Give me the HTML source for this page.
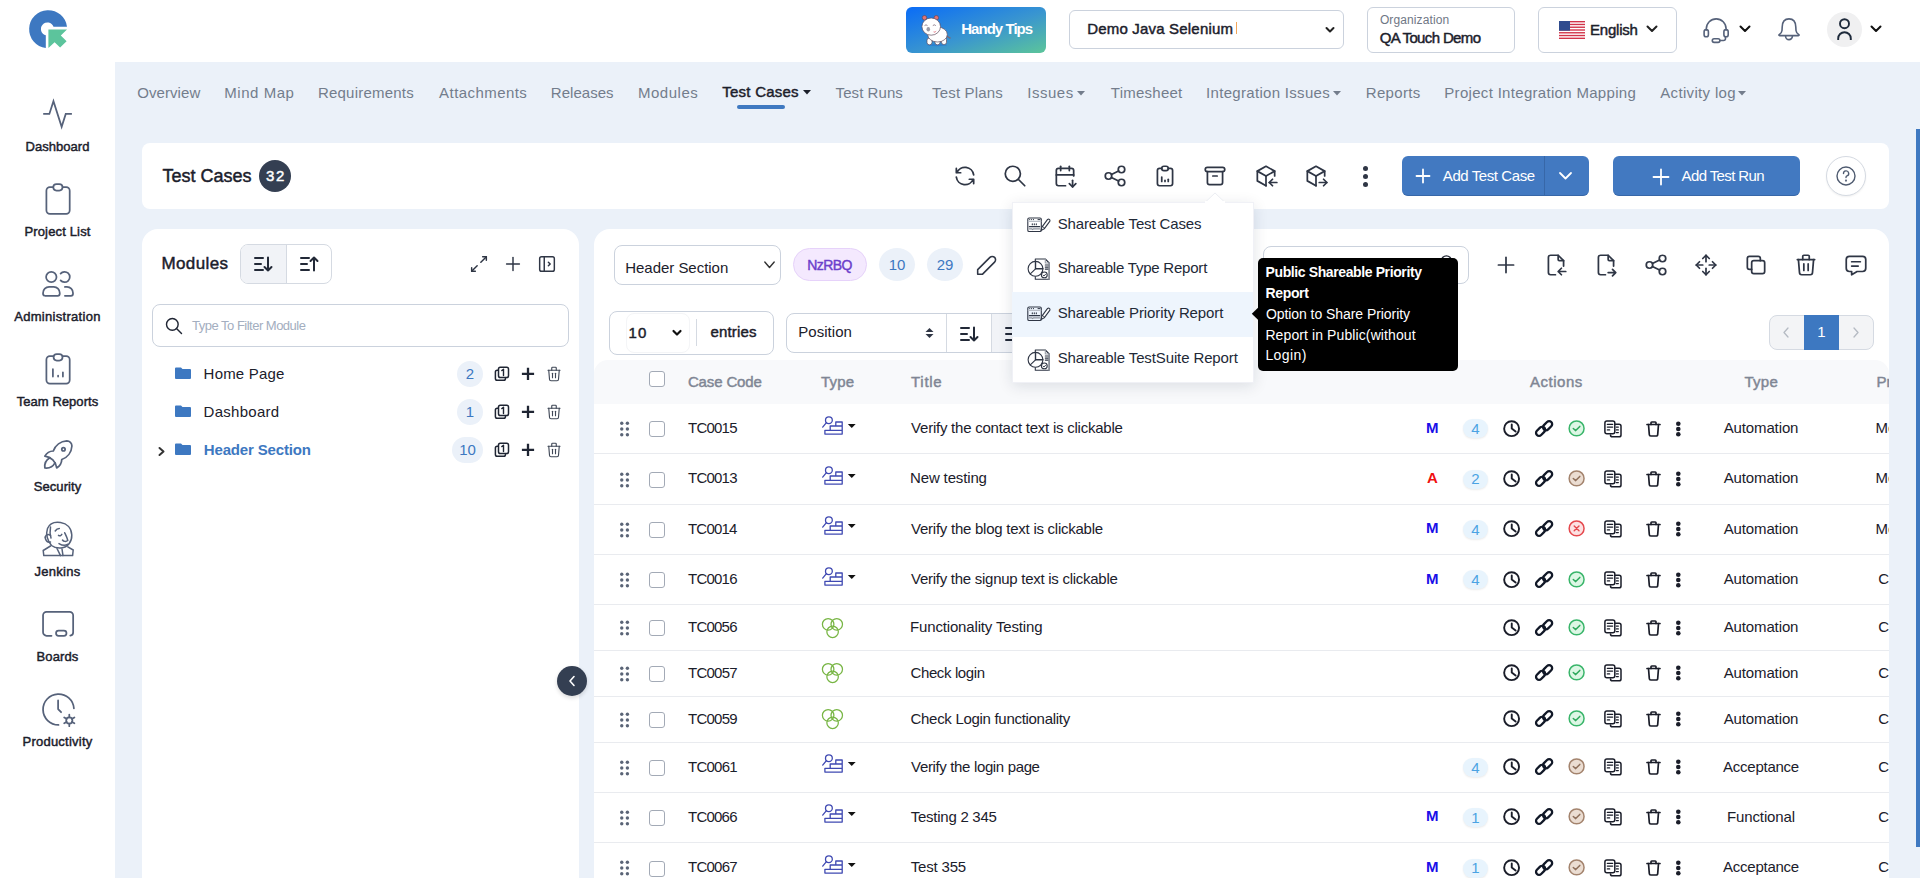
<!DOCTYPE html>
<html><head><meta charset="utf-8"><title>Test Cases</title><style>
*{margin:0;padding:0;box-sizing:border-box}
html,body{width:1920px;height:878px;overflow:hidden;background:#EBF1F9;font-family:"Liberation Sans",sans-serif;color:#1F2533}
.a{position:absolute}
.t{position:absolute;white-space:nowrap}
svg{position:absolute;overflow:visible}
</style></head><body>
<div class="a" style="left:0px;top:0px;width:1920px;height:62px;background:#fff"></div>
<div class="a" style="left:0px;top:0px;width:115px;height:878px;background:#fff"></div>
<svg style="left:29px;top:10px" width="38" height="38" viewBox="29 10 38 38">
<path d="M45.8 48 A19 19 0 1 1 67 26.7 L53.5 26.7 A6.5 6.5 0 1 0 45.8 35.3 Z" fill="#3D78C1"/>
<path d="M48.4 29.4 L67 29.4 L60.8 35.5 L66.6 41.2 L60.1 47.5 L54.6 42.2 L48.4 48 Z" fill="#5CC49C"/>
</svg>
<div class="t" style="left:0.0px;top:140.0px;font-size:13px;line-height:13px;-webkit-text-stroke:0.45px #1B202B;color:#1B202B;width:115px;text-align:center;letter-spacing:0.031px;">Dashboard</div>
<div class="t" style="left:0.0px;top:225.0px;font-size:13px;line-height:13px;-webkit-text-stroke:0.45px #1B202B;color:#1B202B;width:115px;text-align:center;letter-spacing:0.159px;">Project List</div>
<div class="t" style="left:0.0px;top:310.0px;font-size:13px;line-height:13px;-webkit-text-stroke:0.45px #1B202B;color:#1B202B;width:115px;text-align:center;letter-spacing:0.292px;">Administration</div>
<div class="t" style="left:0.0px;top:395.0px;font-size:13px;line-height:13px;-webkit-text-stroke:0.45px #1B202B;color:#1B202B;width:115px;text-align:center;letter-spacing:0.043px;">Team Reports</div>
<div class="t" style="left:0.0px;top:480.0px;font-size:13px;line-height:13px;-webkit-text-stroke:0.45px #1B202B;color:#1B202B;width:115px;text-align:center;letter-spacing:0.089px;">Security</div>
<div class="t" style="left:0.0px;top:565.0px;font-size:13px;line-height:13px;-webkit-text-stroke:0.45px #1B202B;color:#1B202B;width:115px;text-align:center;letter-spacing:0.271px;">Jenkins</div>
<div class="t" style="left:0.0px;top:650.0px;font-size:13px;line-height:13px;-webkit-text-stroke:0.45px #1B202B;color:#1B202B;width:115px;text-align:center;letter-spacing:0.11px;">Boards</div>
<div class="t" style="left:0.0px;top:735.0px;font-size:13px;line-height:13px;-webkit-text-stroke:0.45px #1B202B;color:#1B202B;width:115px;text-align:center;letter-spacing:0.232px;">Productivity</div>
<svg style="left:0;top:0" width="115" height="878" viewBox="0 0 115 878" fill="none" stroke="#56627A" stroke-width="1.75" stroke-linecap="round" stroke-linejoin="round">
<path d="M43.2 113.9 H49.35 L53.45 101.2 L61.65 126.85 L65.75 113.9 H71.9" stroke-linejoin="miter" stroke-linecap="butt"/>
<rect x="46.4" y="187.2" width="23.3" height="26.6" rx="3.5"/>
<rect x="53.3" y="184.1" width="9.2" height="6.4" rx="3.2" fill="#fff"/>
<circle cx="51.3" cy="277" r="5.2"/>
<path d="M60.6 273.66 A5.2 5.2 0 1 1 60.6 280.34"/>
<path d="M45 295.75 A2 2 0 0 1 43.05 293.75 V293 A6 6 0 0 1 49.05 286.95 H53.75 A6 6 0 0 1 59.75 293 V293.75 A2 2 0 0 1 57.75 295.75 Z"/>
<path d="M64.9 286.95 H67 A6 6 0 0 1 73 293 V293.75 A2 2 0 0 1 71 295.75 H64.9"/>
<rect x="46.4" y="356.2" width="23.3" height="27.4" rx="3.5"/>
<rect x="53.6" y="354.1" width="8.9" height="6.4" rx="3.2" fill="#fff"/>
<path d="M52.9 369.2 V376.6 M58.1 375.6 V376.6 M62.9 372.3 V376.6"/>
<g transform="translate(38.1,434.1) scale(1.69)" stroke-width="1.03"><path d="M4 13a8 8 0 0 1 7 7a6 6 0 0 0 3 -5a9 9 0 0 0 6 -8a3 3 0 0 0 -3 -3a9 9 0 0 0 -8 6a6 6 0 0 0 -5 3"/><path d="M7 14a6 6 0 0 0 -3 6a6 6 0 0 0 6 -3"/><circle cx="15" cy="9" r="1"/></g>
<g stroke-width="1.5">
<path d="M51.5 545.5 C47.5 541 45.5 534 47.5 528.5 C50 522.5 56 521.8 60.5 522.5 C67 523.5 71.5 528 71.8 535 C72 541.5 68 547.5 61 548 C57.5 548.3 54 547.5 51.5 545.5 Z"/>
<path d="M50.5 527 C49.8 531 50 535 51 538"/>
<path d="M50.5 535.5 C47 533 44.5 536 45.5 539 C46.3 541.5 48.5 542.5 50.5 542"/>
<path d="M55.2 531 C56.2 529.5 57.8 528.6 59.3 528.6"/>
<path d="M58.5 535.4 C59.8 536.2 61 535.8 61.8 534.4"/>
<path d="M64.7 532.8 C66 535.5 67.3 538 67.8 540.5 C66 542 63.5 541.5 62.5 540"/>
<path d="M59 543.6 C62 545.5 65.5 545.8 68 544.2"/>
<path d="M50.5 546 L43.2 550.5 L43.8 555.6 H72.6 L73.2 550 L67.8 546.8"/>
<path d="M57 548.5 L60.5 555.6 M62 549 L63 555.6"/>
</g>
<path d="M51.5 635.75 H46.55 A3.5 3.5 0 0 1 43.05 632.25 V615.35 A3.5 3.5 0 0 1 46.55 611.85 H69.65 A3.5 3.5 0 0 1 73.15 615.35 V632.25 A3.5 3.5 0 0 1 70.3 635.7"/>
<rect x="56.05" y="630.55" width="10.4" height="5.2" rx="2.5"/>
<path d="M58.5 724.95 A15.45 15.45 0 1 1 73.9 708.4"/>
<path d="M58.1 700.4 V709.1 L61.1 712.2"/>
<circle cx="69.3" cy="720.4" r="3.1"/>
<path d="M69.3 717.3 V714.6 M69.3 723.5 V726.2 M66.6 718.85 L64.2 717.5 M72 718.85 L74.4 717.5 M66.6 721.95 L64.2 723.3 M72 721.95 L74.4 723.3"/>
</svg>
<div class="a" style="left:906px;top:7px;width:140px;height:46px;border-radius:6px;background:linear-gradient(to bottom right,#0A6CF7 0%,#3A96CF 55%,#5CC59A 100%)"></div>
<div class="t" style="left:961.2px;top:20.9px;font-size:15px;line-height:15px;font-weight:700;color:#fff;letter-spacing:-0.956px;">Handy Tips</div>
<svg style="left:906px;top:7px" width="60" height="46" viewBox="906 7 60 46" stroke="#5F4B5B" stroke-width="0.7">
<ellipse cx="937" cy="45" rx="10" ry="1.2" fill="#1F6FD0" stroke="none" opacity="0.5"/>
<path d="M946.5 36 L950.5 38.3" stroke="#7A6A78" stroke-width="1.4"/>
<circle cx="924.5" cy="17.8" r="2.3" fill="#E27373"/>
<circle cx="936.3" cy="17.8" r="2.3" fill="#E27373"/>
<rect x="927" y="38" width="5" height="6.8" rx="2.3" fill="#fff"/>
<rect x="935" y="38" width="5" height="6.8" rx="2.3" fill="#fff"/>
<rect x="941.5" y="37" width="5" height="7.5" rx="2.3" fill="#fff"/>
<ellipse cx="937.5" cy="34.5" rx="9.8" ry="7.5" fill="#fff"/>
<ellipse cx="931.2" cy="26.6" rx="9.3" ry="8.6" fill="#fff"/>
<ellipse cx="928.3" cy="29.2" rx="1.8" ry="2.2" fill="#9A9AA6" stroke="none"/>
<path d="M933 31.5 Q935 32.5 936.6 30.5 Q935 33.8 933 31.5Z" fill="#D94A5A" stroke="none"/>
<path d="M924.5 25.6 Q926 24 927.5 25.6 M932.8 25.6 Q934.3 24 935.8 25.6" fill="none" stroke="#6B5566" stroke-width="0.7"/>
</svg>
<div class="a" style="left:1069px;top:10px;width:275px;height:39px;border:1px solid #CBD2DD;border-radius:6px;background:#fff"></div>
<div class="t" style="left:1087.2px;top:21.1px;font-size:15px;line-height:15px;-webkit-text-stroke:0.45px #1B202B;color:#1B202B;letter-spacing:0.19px;">Demo Java Selenium</div>
<div class="a" style="left:1236px;top:22px;width:1px;height:12px;background:#F2A65A"></div>
<svg style="left:1325px;top:26px;" width="10" height="8" viewBox="0 0 10 8" fill="none" stroke="#222" stroke-width="2" stroke-linecap="round" stroke-linejoin="round"><path d="M1.5 2 L5 5.5 L8.5 2"/></svg>
<div class="a" style="left:1367px;top:7px;width:148px;height:46px;border:1px solid #CBD2DD;border-radius:6px;background:#fff"></div>
<div class="t" style="left:1379.9px;top:13.6px;font-size:12px;line-height:12px;color:#6F7785;letter-spacing:0.114px;">Organization</div>
<div class="t" style="left:1379.7px;top:30.3px;font-size:15px;line-height:15px;-webkit-text-stroke:0.45px #1B202B;color:#1B202B;letter-spacing:-0.635px;">QA Touch Demo</div>
<div class="a" style="left:1538px;top:7px;width:139px;height:46px;border:1px solid #CBD2DD;border-radius:6px;background:#fff"></div>
<div class="a" style="left:1559px;top:21px;width:26px;height:18px;background:#fff"></div>
<svg style="left:1559px;top:21px" width="26" height="18" viewBox="0 0 26 18"><rect x="0" y="0.00" width="26" height="1.38" fill="#D2344A"/><rect x="0" y="2.77" width="26" height="1.38" fill="#D2344A"/><rect x="0" y="5.54" width="26" height="1.38" fill="#D2344A"/><rect x="0" y="8.31" width="26" height="1.38" fill="#D2344A"/><rect x="0" y="11.08" width="26" height="1.38" fill="#D2344A"/><rect x="0" y="13.85" width="26" height="1.38" fill="#D2344A"/><rect x="0" y="16.62" width="26" height="1.38" fill="#D2344A"/><rect x="0" y="0" width="11" height="9.7" fill="#2F4B8E"/></svg>
<div class="t" style="left:1590.0px;top:21.5px;font-size:15px;line-height:15px;-webkit-text-stroke:0.45px #1B202B;color:#1B202B;letter-spacing:-0.217px;">English</div>
<svg style="left:1646px;top:25px;" width="12" height="8" viewBox="0 0 12 8" fill="none" stroke="#222" stroke-width="2" stroke-linecap="round" stroke-linejoin="round"><path d="M1.5 1.5 L6 6 L10.5 1.5"/></svg>
<svg style="left:1690px;top:5px" width="200" height="50" viewBox="1690 5 200 50" fill="none" stroke-linecap="round" stroke-linejoin="round">
<g stroke="#56627A" stroke-width="1.6">
<path d="M1706.3 30 V28.8 A9.9 9.9 0 0 1 1726.1 28.8 V30"/>
<rect x="1704.1" y="29.6" width="4.3" height="7.2" rx="2.1"/>
<rect x="1723.9" y="29.6" width="4.3" height="7.2" rx="2.1"/>
<path d="M1725.5 37 V38.5 A2 2 0 0 1 1723.5 40.5 H1720"/>
<rect x="1712.3" y="38.8" width="7.6" height="3.6" rx="1.8"/>
<path d="M1789 18.9 C1784.2 18.9 1782.3 22.8 1782.2 27 L1782 30.5 C1781.8 32.6 1780.5 33.8 1779.2 34.6 C1778.6 35 1778.9 35.6 1779.6 35.6 H1798.4 C1799.1 35.6 1799.4 35 1798.8 34.6 C1797.5 33.8 1796.2 32.6 1796 30.5 L1795.8 27 C1795.7 22.8 1793.8 18.9 1789 18.9 Z"/>
<path d="M1785.6 36.2 A3.4 3.4 0 0 0 1792.4 36.2"/>
</g>
</svg>
<svg style="left:1739px;top:25px;" width="12" height="8" viewBox="0 0 12 8" fill="none" stroke="#111" stroke-width="2" stroke-linecap="round" stroke-linejoin="round"><path d="M1.5 1.5 L6 6 L10.5 1.5"/></svg>
<div class="a" style="left:1827px;top:12px;width:35px;height:35px;border-radius:50%;background:#F0F0F1"></div>
<svg style="left:1827px;top:12px" width="35" height="35" viewBox="1827 12 35 35" fill="none" stroke="#1E2A3B" stroke-width="1.9" stroke-linecap="butt">
<circle cx="1844.5" cy="23.7" r="4.5"/>
<path d="M1838.2 39.9 V38.5 A6.3 6.3 0 0 1 1850.8 38.5 V39.9"/>
</svg>
<svg style="left:1870px;top:25px;" width="12" height="8" viewBox="0 0 12 8" fill="none" stroke="#111" stroke-width="2" stroke-linecap="round" stroke-linejoin="round"><path d="M1.5 1.5 L6 6 L10.5 1.5"/></svg>
<div class="a" style="left:1916px;top:129px;width:4px;height:718px;background:#3F79C1"></div>
<div class="t" style="left:137.2px;top:85.0px;font-size:15px;line-height:15px;color:#737D8C;letter-spacing:0.079px;">Overview</div>
<div class="t" style="left:224.3px;top:85.0px;font-size:15px;line-height:15px;color:#737D8C;letter-spacing:0.543px;">Mind Map</div>
<div class="t" style="left:317.9px;top:85.0px;font-size:15px;line-height:15px;color:#737D8C;letter-spacing:0.225px;">Requirements</div>
<div class="t" style="left:439.1px;top:85.0px;font-size:15px;line-height:15px;color:#737D8C;letter-spacing:0.433px;">Attachments</div>
<div class="t" style="left:550.8px;top:85.0px;font-size:15px;line-height:15px;color:#737D8C;letter-spacing:0.036px;">Releases</div>
<div class="t" style="left:638.0px;top:85.0px;font-size:15px;line-height:15px;color:#737D8C;letter-spacing:0.517px;">Modules</div>
<div class="t" style="left:835.6px;top:85.0px;font-size:15px;line-height:15px;color:#737D8C;letter-spacing:0.066px;">Test Runs</div>
<div class="t" style="left:932.0px;top:85.0px;font-size:15px;line-height:15px;color:#737D8C;letter-spacing:0.181px;">Test Plans</div>
<div class="t" style="left:1027.3px;top:85.0px;font-size:15px;line-height:15px;color:#737D8C;letter-spacing:0.5px;">Issues</div>
<div class="t" style="left:1110.8px;top:85.0px;font-size:15px;line-height:15px;color:#737D8C;letter-spacing:0.25px;">Timesheet</div>
<div class="t" style="left:1206.1px;top:85.0px;font-size:15px;line-height:15px;color:#737D8C;letter-spacing:0.306px;">Integration Issues</div>
<div class="t" style="left:1365.8px;top:85.0px;font-size:15px;line-height:15px;color:#737D8C;letter-spacing:0.325px;">Reports</div>
<div class="t" style="left:1444.3px;top:85.0px;font-size:15px;line-height:15px;color:#737D8C;letter-spacing:0.31px;">Project Integration Mapping</div>
<div class="t" style="left:1660.3px;top:85.0px;font-size:15px;line-height:15px;color:#737D8C;letter-spacing:0.323px;">Activity log</div>
<div class="t" style="left:722.3px;top:84.0px;font-size:15px;line-height:15px;-webkit-text-stroke:0.45px #1B202B;color:#1B202B;letter-spacing:0.236px;">Test Cases</div>
<svg style="left:802.5px;top:90px" width="8" height="5" viewBox="0 0 8 5"><path d="M0 0 H8 L4 4.5 Z" fill="#1B202B"/></svg>
<svg style="left:1076.5px;top:91px" width="8" height="5" viewBox="0 0 8 5"><path d="M0 0 H8 L4 4.5 Z" fill="#737D8C"/></svg>
<svg style="left:1333px;top:91px" width="8" height="5" viewBox="0 0 8 5"><path d="M0 0 H8 L4 4.5 Z" fill="#737D8C"/></svg>
<svg style="left:1738.3px;top:91px" width="8" height="5" viewBox="0 0 8 5"><path d="M0 0 H8 L4 4.5 Z" fill="#737D8C"/></svg>
<div class="a" style="left:737px;top:105px;width:48px;height:4px;border-radius:2px;background:#3F79C1"></div>
<div class="a" style="left:142px;top:143px;width:1747px;height:66px;border-radius:8px;background:#fff"></div>
<div class="t" style="left:162.4px;top:166.7px;font-size:18px;line-height:18px;-webkit-text-stroke:0.45px #1B202B;color:#1B202B;letter-spacing:0.0px;">Test Cases</div>
<div class="a" style="left:259px;top:160px;width:32px;height:32px;border-radius:50%;background:#343F52"></div>
<div class="t" style="left:266.0px;top:168.1px;font-size:15px;line-height:15px;-webkit-text-stroke:0.45px #fff;color:#fff;letter-spacing:1.625px;">32</div>
<svg style="left:952.0px;top:163.0px;" width="26" height="26" viewBox="0 0 24 24" fill="none" stroke="#2F3645" stroke-width="1.6" stroke-linecap="round" stroke-linejoin="round"><path d="M20 11a8.1 8.1 0 0 0 -15.5 -2m-.5 -4v4h4"/><path d="M4 13a8.1 8.1 0 0 0 15.5 2m.5 4v-4h-4"/></svg>
<svg style="left:1002.0px;top:163.0px;" width="26" height="26" viewBox="0 0 24 24" fill="none" stroke="#2F3645" stroke-width="1.6" stroke-linecap="round" stroke-linejoin="round"><circle cx="10" cy="10" r="7"/><path d="M21 21l-6 -6"/></svg>
<svg style="left:1052.0px;top:163.0px;" width="26" height="26" viewBox="0 0 24 24" fill="none" stroke="#2F3645" stroke-width="1.6" stroke-linecap="round" stroke-linejoin="round"><path d="M12.5 21h-6.5a2 2 0 0 1 -2 -2v-12a2 2 0 0 1 2 -2h12a2 2 0 0 1 2 2v5"/><path d="M19 16v6"/><path d="M22 19l-3 3l-3 -3"/><path d="M16 3v4"/><path d="M8 3v4"/><path d="M4 11h16"/></svg>
<svg style="left:1102.0px;top:163.0px;" width="26" height="26" viewBox="0 0 24 24" fill="none" stroke="#2F3645" stroke-width="1.6" stroke-linecap="round" stroke-linejoin="round"><circle cx="6" cy="12" r="3"/><circle cx="18" cy="6" r="3"/><circle cx="18" cy="18" r="3"/><path d="M8.7 10.7l6.6 -3.4"/><path d="M8.7 13.3l6.6 3.4"/></svg>
<svg style="left:1152.0px;top:163.0px;" width="26" height="26" viewBox="0 0 24 24" fill="none" stroke="#2F3645" stroke-width="1.6" stroke-linecap="round" stroke-linejoin="round"><path d="M9 5h-2a2 2 0 0 0 -2 2v12a2 2 0 0 0 2 2h10a2 2 0 0 0 2 -2v-12a2 2 0 0 0 -2 -2h-2"/><rect x="9" y="3" width="6" height="4" rx="2"/><path d="M9 17v-4"/><path d="M12 17v-1"/><path d="M15 17v-2"/></svg>
<svg style="left:1202.0px;top:163.0px;" width="26" height="26" viewBox="0 0 24 24" fill="none" stroke="#2F3645" stroke-width="1.6" stroke-linecap="round" stroke-linejoin="round"><rect x="3" y="4" width="18" height="4" rx="2"/><path d="M5 8v10a2 2 0 0 0 2 2h10a2 2 0 0 0 2 -2v-10"/><path d="M10 12l4 0"/></svg>
<svg style="left:1253.0px;top:163.0px;" width="26" height="26" viewBox="0 0 24 24" fill="none" stroke="#2F3645" stroke-width="1.6" stroke-linecap="round" stroke-linejoin="round"><path d="M12 21l-8 -4.5v-9l8 -4.5l8 4.5v4.5"/><path d="M12 12l8 -4.5"/><path d="M12 12v9"/><path d="M12 12l-8 -4.5"/><path d="M22 18h-7"/><path d="M18 15l-3 3l3 3"/></svg>
<svg style="left:1303.0px;top:163.0px;" width="26" height="26" viewBox="0 0 24 24" fill="none" stroke="#2F3645" stroke-width="1.6" stroke-linecap="round" stroke-linejoin="round"><path d="M12 21l-8 -4.5v-9l8 -4.5l8 4.5v4.5"/><path d="M12 12l8 -4.5"/><path d="M12 12v9"/><path d="M12 12l-8 -4.5"/><path d="M15 18h7"/><path d="M19 15l3 3l-3 3"/></svg>
<div class="a" style="left:1363px;top:165.5px;width:5px;height:5px;border-radius:50%;background:#2F3645"></div>
<div class="a" style="left:1363px;top:173.5px;width:5px;height:5px;border-radius:50%;background:#2F3645"></div>
<div class="a" style="left:1363px;top:181.5px;width:5px;height:5px;border-radius:50%;background:#2F3645"></div>
<div class="a" style="left:1402px;top:156px;width:187px;height:40px;border-radius:6px;background:#4279C1;border-bottom:1px solid #3767A8"></div>
<div class="a" style="left:1544px;top:156px;width:1px;height:40px;background:#3767A8"></div>
<svg style="left:1416px;top:169px;" width="14" height="14" viewBox="0 0 14 14" fill="none" stroke="#fff" stroke-width="1.8" stroke-linecap="round" stroke-linejoin="round"><path d="M7 0.5 V13.5 M0.5 7 H13.5"/></svg>
<div class="t" style="left:1442.8px;top:168.1px;font-size:15px;line-height:15px;color:#fff;letter-spacing:-0.413px;">Add Test Case</div>
<svg style="left:1559px;top:172px;" width="13" height="8" viewBox="0 0 13 8" fill="none" stroke="#fff" stroke-width="1.8" stroke-linecap="round" stroke-linejoin="round"><path d="M1 1 L6.5 6.5 L12 1"/></svg>
<div class="a" style="left:1613px;top:156px;width:187px;height:40px;border-radius:6px;background:#4279C1;border-bottom:1px solid #3767A8"></div>
<svg style="left:1653px;top:169px;" width="16" height="16" viewBox="0 0 16 16" fill="none" stroke="#fff" stroke-width="1.8" stroke-linecap="round" stroke-linejoin="round"><path d="M8 0.5 V15.5 M0.5 8 H15.5"/></svg>
<div class="t" style="left:1681.6px;top:168.1px;font-size:15px;line-height:15px;color:#fff;letter-spacing:-0.625px;">Add Test Run</div>
<div class="a" style="left:1826px;top:156px;width:40px;height:40px;border-radius:50%;border:1px solid #D5DAE2;background:#fff;box-shadow:0 1px 2px rgba(0,0,0,0.06)"></div>
<svg style="left:1836px;top:166px;" width="20" height="20" viewBox="0 0 20 20" fill="none" stroke="#4F5B70" stroke-width="1.4" stroke-linecap="round" stroke-linejoin="round"><circle cx="10" cy="10" r="9"/><path d="M7.5 7.5 a2.6 2.6 0 1 1 3.5 2.4 c-.7 .3 -1 .8 -1 1.6"/><circle cx="10" cy="14.6" r=".4" fill="#4F5B70"/></svg>
<div class="a" style="left:142px;top:229px;width:437px;height:700px;border-radius:16px;background:#fff"></div>
<div class="t" style="left:161.4px;top:254.6px;font-size:17px;line-height:17px;-webkit-text-stroke:0.45px #1B202B;color:#1B202B;letter-spacing:0.392px;">Modules</div>
<div class="a" style="left:240px;top:244px;width:92px;height:40px;border:1px solid #D5DAE2;border-radius:8px;background:#fff;overflow:hidden"></div>
<div class="a" style="left:241px;top:245px;width:45px;height:38px;background:#F1F3F7;border-radius:7px 0 0 7px"></div>
<div class="a" style="left:286px;top:245px;width:1px;height:38px;background:#D5DAE2"></div>
<svg style="left:254px;top:256px;" width="19" height="16" viewBox="0 0 19 16" fill="none" stroke="#222937" stroke-width="2" stroke-linecap="round" stroke-linejoin="round"><path d="M1 2 H9 M1 8 H7 M1 14 H9"/><path d="M14 1.5 V14.5 M10.5 11 L14 14.5 L17.5 11"/></svg>
<svg style="left:300px;top:256px;" width="19" height="16" viewBox="0 0 19 16" fill="none" stroke="#222937" stroke-width="2" stroke-linecap="round" stroke-linejoin="round"><path d="M1 2 H9 M1 8 H7 M1 14 H9"/><path d="M14 1.5 V14.5 M10.5 5 L14 1.5 L17.5 5"/></svg>
<svg style="left:468.0px;top:253.0px;" width="22" height="22" viewBox="0 0 24 24" fill="none" stroke="#2F3645" stroke-width="1.6" stroke-linecap="round" stroke-linejoin="round"><path d="M16 4l4 0l0 4"/><path d="M14 10l6 -6"/><path d="M8 20l-4 0l0 -4"/><path d="M4 20l6 -6"/></svg>
<svg style="left:502.0px;top:253.0px;" width="22" height="22" viewBox="0 0 24 24" fill="none" stroke="#2F3645" stroke-width="1.6" stroke-linecap="round" stroke-linejoin="round"><path d="M12 5l0 14"/><path d="M5 12l14 0"/></svg>
<svg style="left:536.0px;top:253.0px;" width="22" height="22" viewBox="0 0 24 24" fill="none" stroke="#2F3645" stroke-width="1.6" stroke-linecap="round" stroke-linejoin="round"><rect x="4" y="4" width="16" height="16" rx="2"/><path d="M9 4v16"/><path d="M13.5 10l2 2l-2 2"/></svg>
<div class="a" style="left:152px;top:304px;width:417px;height:43px;border:1px solid #CBD2DD;border-radius:8px;background:#fff"></div>
<svg style="left:164.0px;top:316.0px;" width="20" height="20" viewBox="0 0 24 24" fill="none" stroke="#1F2533" stroke-width="1.7" stroke-linecap="round" stroke-linejoin="round"><circle cx="10" cy="10" r="7"/><path d="M21 21l-6 -6"/></svg>
<div class="t" style="left:192.1px;top:319.0px;font-size:13px;line-height:13px;color:#A3AEC0;letter-spacing:-0.512px;">Type To Filter Module</div>
<svg style="left:175px;top:367px" width="16" height="12" viewBox="0 0 16 12"><path d="M1 0.5 H6 L7.5 2 H15 A1 1 0 0 1 16 3 V11 A1 1 0 0 1 15 12 H1 A1 1 0 0 1 0 11 V1.5 A1 1 0 0 1 1 0.5Z" fill="#3D78C1"/></svg>
<div class="t" style="left:203.6px;top:366.3px;font-size:15px;line-height:15px;color:#1B202B;letter-spacing:0.203px;">Home Page</div>
<div class="a" style="left:457px;top:361px;width:26px;height:26px;border-radius:13px;background:#EBF1F9"></div>
<div class="t" style="left:457.0px;top:365.9px;font-size:15px;line-height:15px;color:#3D78C1;width:26px;text-align:center;">2</div>
<svg style="left:490px;top:362px" width="80" height="24" viewBox="490 -12 80 24" fill="none" stroke="#1F2533" stroke-linejoin="round"><rect x="495.4" y="-3.7" width="10.1" height="10" rx="1.8" stroke-width="1.5"/><rect x="498.5" y="-6.7" width="10" height="10.2" rx="1.8" fill="#fff" stroke-width="1.5"/><path d="M501.8 -3.5 L503.5 -4.8 V1.5" stroke-width="1.4" stroke-linecap="round"/><path d="M528 -6.2 V6.1 M521.9 -0.05 H534.1" stroke-width="2.3"/></svg>
<svg style="left:545.0px;top:365.0px;" width="18" height="18" viewBox="0 0 24 24" fill="none" stroke="#3F4756" stroke-width="1.5" stroke-linecap="round" stroke-linejoin="round"><path d="M4 7l16 0"/><path d="M10 11l0 6"/><path d="M14 11l0 6"/><path d="M5 7l1 12a2 2 0 0 0 2 2h8a2 2 0 0 0 2 -2l1 -12"/><path d="M9 7v-3a1 1 0 0 1 1 -1h4a1 1 0 0 1 1 1v3"/></svg>
<svg style="left:175px;top:405px" width="16" height="12" viewBox="0 0 16 12"><path d="M1 0.5 H6 L7.5 2 H15 A1 1 0 0 1 16 3 V11 A1 1 0 0 1 15 12 H1 A1 1 0 0 1 0 11 V1.5 A1 1 0 0 1 1 0.5Z" fill="#3D78C1"/></svg>
<div class="t" style="left:203.6px;top:404.3px;font-size:15px;line-height:15px;color:#1B202B;letter-spacing:0.272px;">Dashboard</div>
<div class="a" style="left:457px;top:399px;width:26px;height:26px;border-radius:13px;background:#EBF1F9"></div>
<div class="t" style="left:457.0px;top:403.9px;font-size:15px;line-height:15px;color:#3D78C1;width:26px;text-align:center;">1</div>
<svg style="left:490px;top:400px" width="80" height="24" viewBox="490 -12 80 24" fill="none" stroke="#1F2533" stroke-linejoin="round"><rect x="495.4" y="-3.7" width="10.1" height="10" rx="1.8" stroke-width="1.5"/><rect x="498.5" y="-6.7" width="10" height="10.2" rx="1.8" fill="#fff" stroke-width="1.5"/><path d="M501.8 -3.5 L503.5 -4.8 V1.5" stroke-width="1.4" stroke-linecap="round"/><path d="M528 -6.2 V6.1 M521.9 -0.05 H534.1" stroke-width="2.3"/></svg>
<svg style="left:545.0px;top:403.0px;" width="18" height="18" viewBox="0 0 24 24" fill="none" stroke="#3F4756" stroke-width="1.5" stroke-linecap="round" stroke-linejoin="round"><path d="M4 7l16 0"/><path d="M10 11l0 6"/><path d="M14 11l0 6"/><path d="M5 7l1 12a2 2 0 0 0 2 2h8a2 2 0 0 0 2 -2l1 -12"/><path d="M9 7v-3a1 1 0 0 1 1 -1h4a1 1 0 0 1 1 1v3"/></svg>
<svg style="left:175px;top:443px" width="16" height="12" viewBox="0 0 16 12"><path d="M1 0.5 H6 L7.5 2 H15 A1 1 0 0 1 16 3 V11 A1 1 0 0 1 15 12 H1 A1 1 0 0 1 0 11 V1.5 A1 1 0 0 1 1 0.5Z" fill="#3D78C1"/></svg>
<div class="t" style="left:203.8px;top:442.3px;font-size:15px;line-height:15px;font-weight:700;color:#3D78C1;letter-spacing:-0.158px;">Header Section</div>
<div class="a" style="left:452px;top:437px;width:31px;height:26px;border-radius:13px;background:#EBF1F9"></div>
<div class="t" style="left:452.0px;top:441.9px;font-size:15px;line-height:15px;color:#3D78C1;width:31px;text-align:center;">10</div>
<svg style="left:490px;top:438px" width="80" height="24" viewBox="490 -12 80 24" fill="none" stroke="#1F2533" stroke-linejoin="round"><rect x="495.4" y="-3.7" width="10.1" height="10" rx="1.8" stroke-width="1.5"/><rect x="498.5" y="-6.7" width="10" height="10.2" rx="1.8" fill="#fff" stroke-width="1.5"/><path d="M501.8 -3.5 L503.5 -4.8 V1.5" stroke-width="1.4" stroke-linecap="round"/><path d="M528 -6.2 V6.1 M521.9 -0.05 H534.1" stroke-width="2.3"/></svg>
<svg style="left:545.0px;top:441.0px;" width="18" height="18" viewBox="0 0 24 24" fill="none" stroke="#3F4756" stroke-width="1.5" stroke-linecap="round" stroke-linejoin="round"><path d="M4 7l16 0"/><path d="M10 11l0 6"/><path d="M14 11l0 6"/><path d="M5 7l1 12a2 2 0 0 0 2 2h8a2 2 0 0 0 2 -2l1 -12"/><path d="M9 7v-3a1 1 0 0 1 1 -1h4a1 1 0 0 1 1 1v3"/></svg>
<svg style="left:158px;top:447px;" width="7" height="9" viewBox="0 0 7 9" fill="none" stroke="#333" stroke-width="2" stroke-linecap="round" stroke-linejoin="round"><path d="M1.5 1 L5.5 4.5 L1.5 8"/></svg>
<div class="a" style="left:557px;top:666px;width:30px;height:30px;border-radius:50%;background:#343F52;box-shadow:0 2px 4px rgba(0,0,0,0.15)"></div>
<svg style="left:567px;top:675px;" width="10" height="12" viewBox="0 0 10 12" fill="none" stroke="#fff" stroke-width="1.6" stroke-linecap="round" stroke-linejoin="round"><path d="M7 1.5 L3 6 L7 10.5"/></svg>
<div class="a" style="left:594px;top:229px;width:1295px;height:700px;border-radius:16px;background:#fff;overflow:hidden"></div>
<div class="a" style="left:614px;top:245px;width:167px;height:40px;border:1px solid #CBD2DD;border-radius:8px;background:#fff"></div>
<div class="t" style="left:625.2px;top:259.8px;font-size:15px;line-height:15px;color:#1B202B;letter-spacing:-0.025px;">Header Section</div>
<svg style="left:764px;top:261px;" width="11" height="8" viewBox="0 0 11 8" fill="none" stroke="#333" stroke-width="1.4" stroke-linecap="round" stroke-linejoin="round"><path d="M0.8 1 L5.5 6.5 L10.2 1"/></svg>
<div class="a" style="left:793px;top:248px;width:74px;height:33px;border:1px solid #E6D2FA;border-radius:17px;background:#F4E9FE"></div>
<div class="t" style="left:807.3px;top:258.1px;font-size:14px;line-height:14px;-webkit-text-stroke:0.45px #6C3FCB;color:#6C3FCB;letter-spacing:-0.581px;">NzRBQ</div>
<div class="a" style="left:879px;top:248px;width:36px;height:33px;border-radius:50%;background:#EBF1F9"></div>
<div class="t" style="left:879.0px;top:257.3px;font-size:15px;line-height:15px;color:#3D78C1;width:36px;text-align:center;">10</div>
<div class="a" style="left:927px;top:248px;width:36px;height:33px;border-radius:50%;background:#EBF1F9"></div>
<div class="t" style="left:927.0px;top:257.3px;font-size:15px;line-height:15px;color:#3D78C1;width:36px;text-align:center;">29</div>
<svg style="left:973.3px;top:251.3px;" width="28" height="28" viewBox="0 0 24 24" fill="none" stroke="#2F3645" stroke-width="1.35" stroke-linecap="round" stroke-linejoin="round"><path d="M4 20h4l10.5 -10.5a2.828 2.828 0 1 0 -4 -4l-10.5 10.5v4"/></svg>
<div class="a" style="left:1263px;top:246px;width:206px;height:38px;border:1px solid #CBD2DD;border-radius:8px;background:#fff"></div>
<svg style="left:1440px;top:255px;" width="13" height="13" viewBox="1440 255 13 13" fill="none" stroke="#1F2533" stroke-width="1.4" stroke-linecap="round" stroke-linejoin="round"><circle cx="1446.4" cy="260.9" r="5"/></svg>
<svg style="left:1493.0px;top:252.0px;" width="26" height="26" viewBox="0 0 24 24" fill="none" stroke="#2F3645" stroke-width="1.6" stroke-linecap="round" stroke-linejoin="round"><path d="M12 5l0 14"/><path d="M5 12l14 0"/></svg>
<svg style="left:1543.0px;top:252.0px;" width="26" height="26" viewBox="0 0 24 24" fill="none" stroke="#2F3645" stroke-width="1.6" stroke-linecap="round" stroke-linejoin="round"><path d="M14 3v4a1 1 0 0 0 1 1h4"/><path d="M11.5 21h-4.5a2 2 0 0 1 -2 -2v-14a2 2 0 0 1 2 -2h7l5 5v5"/><path d="M21 18h-7m3 -3l-3 3l3 3"/></svg>
<svg style="left:1593.0px;top:252.0px;" width="26" height="26" viewBox="0 0 24 24" fill="none" stroke="#2F3645" stroke-width="1.6" stroke-linecap="round" stroke-linejoin="round"><path d="M14 3v4a1 1 0 0 0 1 1h4"/><path d="M11.5 21h-4.5a2 2 0 0 1 -2 -2v-14a2 2 0 0 1 2 -2h7l5 5v5m-5 6h7m-3 -3l3 3l-3 3"/></svg>
<svg style="left:1643.0px;top:252.0px;" width="26" height="26" viewBox="0 0 24 24" fill="none" stroke="#2F3645" stroke-width="1.6" stroke-linecap="round" stroke-linejoin="round"><circle cx="6" cy="12" r="3"/><circle cx="18" cy="6" r="3"/><circle cx="18" cy="18" r="3"/><path d="M8.7 10.7l6.6 -3.4"/><path d="M8.7 13.3l6.6 3.4"/></svg>
<svg style="left:1693.0px;top:252.0px;" width="26" height="26" viewBox="0 0 24 24" fill="none" stroke="#2F3645" stroke-width="1.6" stroke-linecap="round" stroke-linejoin="round"><path d="M18 9l3 3l-3 3"/><path d="M15 12h6"/><path d="M6 9l-3 3l3 3"/><path d="M3 12h6"/><path d="M9 18l3 3l3 -3"/><path d="M12 15v6"/><path d="M15 6l-3 -3l-3 3"/><path d="M12 3v6"/></svg>
<svg style="left:1743.0px;top:252.0px;" width="26" height="26" viewBox="0 0 24 24" fill="none" stroke="#2F3645" stroke-width="1.6" stroke-linecap="round" stroke-linejoin="round"><rect x="8" y="8" width="12" height="12" rx="2"/><path d="M16 8v-2a2 2 0 0 0 -2 -2h-8a2 2 0 0 0 -2 2v8a2 2 0 0 0 2 2h2"/></svg>
<svg style="left:1793.0px;top:252.0px;" width="26" height="26" viewBox="0 0 24 24" fill="none" stroke="#2F3645" stroke-width="1.6" stroke-linecap="round" stroke-linejoin="round"><path d="M4 7l16 0"/><path d="M10 11l0 6"/><path d="M14 11l0 6"/><path d="M5 7l1 12a2 2 0 0 0 2 2h8a2 2 0 0 0 2 -2l1 -12"/><path d="M9 7v-3a1 1 0 0 1 1 -1h4a1 1 0 0 1 1 1v3"/></svg>
<svg style="left:1843.0px;top:252.0px;" width="26" height="26" viewBox="0 0 24 24" fill="none" stroke="#2F3645" stroke-width="1.6" stroke-linecap="round" stroke-linejoin="round"><path d="M8 9h8"/><path d="M8 13h6"/><path d="M18 4a3 3 0 0 1 3 3v8a3 3 0 0 1 -3 3h-5l-5 3v-3h-2a3 3 0 0 1 -3 -3v-8a3 3 0 0 1 3 -3h12z"/></svg>
<div class="a" style="left:609px;top:311px;width:165px;height:44px;border:1px solid #CBD2DD;border-radius:8px;background:#fff"></div>
<div class="a" style="left:626px;top:313px;width:64px;height:40px;border:1px solid #F4F5F7;border-radius:8px;background:#fff"></div>
<div class="t" style="left:628.5px;top:325.3px;font-size:15px;line-height:15px;-webkit-text-stroke:0.45px #1B202B;color:#1B202B;letter-spacing:1.2px;">10</div>
<svg style="left:672px;top:329px;" width="10" height="8" viewBox="0 0 10 8" fill="none" stroke="#111" stroke-width="2.2" stroke-linecap="round" stroke-linejoin="round"><path d="M1.5 2 L5 5.5 L8.5 2"/></svg>
<div class="a" style="left:696px;top:319px;width:1px;height:27px;background:#D5DAE2"></div>
<div class="t" style="left:710.4px;top:324.3px;font-size:15px;line-height:15px;-webkit-text-stroke:0.45px #1B202B;color:#1B202B;letter-spacing:0.188px;">entries</div>
<div class="a" style="left:786px;top:313px;width:260px;height:40px;border:1px solid #CBD2DD;border-radius:8px;background:#fff;overflow:hidden"></div>
<div class="a" style="left:946px;top:314px;width:1px;height:38px;background:#D5DAE2"></div>
<div class="a" style="left:992px;top:314px;width:54px;height:38px;background:#F1F3F7"></div>
<div class="a" style="left:991px;top:314px;width:1px;height:38px;background:#D5DAE2"></div>
<div class="t" style="left:798.2px;top:324.3px;font-size:15px;line-height:15px;color:#1B202B;letter-spacing:0.054px;">Position</div>
<svg style="left:925px;top:328px" width="9" height="10" viewBox="0 0 9 10"><path d="M0.5 4 L4.5 0 L8.5 4Z M0.5 6 L4.5 10 L8.5 6Z" fill="#2F3645"/></svg>
<svg style="left:960px;top:326px;" width="19" height="16" viewBox="0 0 19 16" fill="none" stroke="#222937" stroke-width="2" stroke-linecap="round" stroke-linejoin="round"><path d="M1 2 H9 M1 8 H7 M1 14 H9"/><path d="M14 1.5 V14.5 M10.5 11 L14 14.5 L17.5 11"/></svg>
<svg style="left:1005px;top:326px;" width="19" height="16" viewBox="0 0 19 16" fill="none" stroke="#222937" stroke-width="2" stroke-linecap="round" stroke-linejoin="round"><path d="M1 2 H9 M1 8 H7 M1 14 H9"/></svg>
<div class="a" style="left:1769px;top:315px;width:105px;height:35px;border:1px solid #D5DAE2;border-radius:8px;background:#F3F4F6;overflow:hidden"></div>
<div class="a" style="left:1804px;top:315px;width:35px;height:35px;background:#3D78C1"></div>
<div class="t" style="left:1804.0px;top:324.3px;font-size:15px;line-height:15px;color:#fff;width:35px;text-align:center;">1</div>
<svg style="left:1783px;top:327px;" width="6" height="11" viewBox="0 0 6 11" fill="none" stroke="#B5BAC3" stroke-width="1.3" stroke-linecap="round" stroke-linejoin="round"><path d="M5 1 L1 5.5 L5 10"/></svg>
<svg style="left:1853px;top:327px;" width="6" height="11" viewBox="0 0 6 11" fill="none" stroke="#B5BAC3" stroke-width="1.3" stroke-linecap="round" stroke-linejoin="round"><path d="M1 1 L5 5.5 L1 10"/></svg>
<div class="a" style="left:594px;top:360px;width:1295px;height:44px;border-radius:14px 14px 0 0;background:#F8F9FB"></div>
<div class="a" style="left:649px;top:371px;width:16px;height:16px;border:1px solid #A3AAB6;border-radius:3px;background:#fff"></div>
<div class="t" style="left:687.9px;top:374.0px;font-size:15px;line-height:15px;-webkit-text-stroke:0.45px #7F8694;color:#7F8694;letter-spacing:-0.131px;">Case Code</div>
<div class="t" style="left:821.0px;top:374.0px;font-size:15px;line-height:15px;-webkit-text-stroke:0.45px #7F8694;color:#7F8694;letter-spacing:0.2px;">Type</div>
<div class="t" style="left:911.0px;top:374.0px;font-size:15px;line-height:15px;-webkit-text-stroke:0.45px #7F8694;color:#7F8694;letter-spacing:0.731px;">Title</div>
<div class="t" style="left:1530.0px;top:374.0px;font-size:15px;line-height:15px;-webkit-text-stroke:0.45px #7F8694;color:#7F8694;letter-spacing:0.525px;">Actions</div>
<div class="t" style="left:1744.4px;top:374.0px;font-size:15px;line-height:15px;-webkit-text-stroke:0.45px #7F8694;color:#7F8694;letter-spacing:0.3px;">Type</div>
<div class="t" style="left:1876.5px;top:374.0px;font-size:15px;line-height:15px;-webkit-text-stroke:0.45px #7F8694;color:#7F8694;">Pr</div>
<div class="a" style="left:594px;top:453px;width:1295px;height:1px;background:#E9EBEF"></div>
<svg style="left:615px;top:419px" width="20" height="20" viewBox="615 -10 20 20" fill="#5B6577"><circle cx="621.75" cy="-5.75" r="1.7"/><circle cx="627.4" cy="-5.75" r="1.7"/><circle cx="621.75" cy="0" r="1.7"/><circle cx="627.4" cy="0" r="1.7"/><circle cx="621.75" cy="5.75" r="1.7"/><circle cx="627.4" cy="5.75" r="1.7"/></svg>
<div class="a" style="left:649px;top:421.4px;width:16px;height:16px;border:1px solid #A3AAB6;border-radius:3px;background:#fff"></div>
<div class="t" style="left:688.0px;top:420.2px;font-size:15px;line-height:15px;color:#1B202B;letter-spacing:-0.775px;">TC0015</div>
<svg style="left:815px;top:413.90px" width="45" height="30" viewBox="815 -15 45 30" fill="none" stroke="#3F49B2" stroke-width="1.3" stroke-linejoin="round"><circle cx="828.9" cy="-8.8" r="3.4"/><path d="M826.4 -6.3 L822.7 -1.9" stroke-linecap="round"/><path d="M824.9 1.3 H842.2 V5.1 H824.9 Z M830.2 1.3 V-3 H842.2 V1.3 M835.8 -3 V-7 H842.2 V-3"/><path d="M847.8 -5.1 H855.7 L851.75 -1.0 Z" fill="#111" stroke="none"/></svg>
<div class="t" style="left:911.1px;top:420.2px;font-size:15px;line-height:15px;color:#1B202B;letter-spacing:-0.239px;">Verify the contact text is clickable</div>
<div class="t" style="left:1426.0px;top:419.9px;font-size:15px;line-height:15px;font-weight:700;color:#1A0FE8;">M</div>
<div class="a" style="left:1463px;top:419.4px;width:25px;height:19px;border-radius:10px;background:#E8F4FD;box-shadow:0 1px 2px rgba(0,0,0,0.08)"></div>
<div class="t" style="left:1463.0px;top:421.2px;font-size:15px;line-height:15px;color:#4BA3E3;width:25px;text-align:center;">4</div>
<svg style="left:1498px;top:414.90px" width="130" height="28" viewBox="1498 -14 130 28" fill="none" stroke-linecap="round" stroke-linejoin="round"><circle cx="1511.6" cy="-0.3" r="7.45" stroke="#1A1D29" stroke-width="1.9"/><path d="M1511.75 -4.6 V-0.5 L1515.6 2.4" stroke="#1A1D29" stroke-width="1.9"/><rect x="1542.4" y="-6.3" width="10.4" height="6" rx="3" transform="rotate(-45 1547.6 -3.3)" stroke="#111827" stroke-width="2.3"/><rect x="1535.4" y="-0.65" width="10.4" height="6" rx="3" transform="rotate(-45 1540.6 2.35)" stroke="#111827" stroke-width="2.3"/><circle cx="1576.6" cy="-0.6" r="7.45" fill="#DDF7E5" stroke="#39B56A" stroke-width="1.5"/><path d="M1573.3 -0.5 L1575.7 1.6 L1579.8 -2.6" stroke="#2EA85C" stroke-width="1.5"/><path d="M1615.5 -4.8 H1619 A2 2 0 0 1 1621 -2.8 V5.9 A1.9 1.9 0 0 1 1619.1 7.8 H1612.4 A1.9 1.9 0 0 1 1610.5 5.9" stroke="#1A1D29" stroke-width="1.5"/><path d="M1616.4 -1.9 H1618.3 M1616.4 0.9 H1618.3 M1616.4 3.6 H1618.3" stroke="#1A1D29" stroke-width="1.4"/><rect x="1604.9" y="-8" width="9.9" height="12.8" rx="2" fill="#fff" stroke="#1A1D29" stroke-width="1.5"/><path d="M1607.4 -4.6 H1612.6 M1607.4 -1.9 H1612.6 M1607.4 0.9 H1609.6" stroke="#1A1D29" stroke-width="1.4"/></svg>
<svg style="left:1646px;top:420.9px;" width="15" height="16" viewBox="0 0 15 16" fill="none" stroke="#1A1D29" stroke-width="1.7" stroke-linecap="round" stroke-linejoin="round"><path d="M1 3.5 H14"/><path d="M2.5 3.5 L3.3 13.5 A1.5 1.5 0 0 0 4.8 15 H10.2 A1.5 1.5 0 0 0 11.7 13.5 L12.5 3.5"/><path d="M5 3.5 V1.8 A.8 .8 0 0 1 5.8 1 H9.2 A.8 .8 0 0 1 10 1.8 V3.5"/></svg>
<svg style="left:1668px;top:418.90px" width="20" height="20" viewBox="1668 -10 20 20" fill="#1A1D29"><circle cx="1678.3" cy="-5.3" r="2.3"/><circle cx="1678.3" cy="0" r="2.3"/><circle cx="1678.3" cy="5.3" r="2.3"/></svg>
<div class="t" style="left:1661.0px;top:420.2px;font-size:15px;line-height:15px;color:#1B202B;width:200px;text-align:center;letter-spacing:-0.119px;">Automation</div>
<div class="t" style="left:1875.5px;top:420.2px;font-size:15px;line-height:15px;color:#1B202B;">Mo</div>
<div class="a" style="left:594px;top:504px;width:1295px;height:1px;background:#E9EBEF"></div>
<svg style="left:615px;top:470px" width="20" height="20" viewBox="615 -10 20 20" fill="#5B6577"><circle cx="621.75" cy="-5.75" r="1.7"/><circle cx="627.4" cy="-5.75" r="1.7"/><circle cx="621.75" cy="0" r="1.7"/><circle cx="627.4" cy="0" r="1.7"/><circle cx="621.75" cy="5.75" r="1.7"/><circle cx="627.4" cy="5.75" r="1.7"/></svg>
<div class="a" style="left:649px;top:471.6px;width:16px;height:16px;border:1px solid #A3AAB6;border-radius:3px;background:#fff"></div>
<div class="t" style="left:688.0px;top:470.4px;font-size:15px;line-height:15px;color:#1B202B;letter-spacing:-0.775px;">TC0013</div>
<svg style="left:815px;top:464.10px" width="45" height="30" viewBox="815 -15 45 30" fill="none" stroke="#3F49B2" stroke-width="1.3" stroke-linejoin="round"><circle cx="828.9" cy="-8.8" r="3.4"/><path d="M826.4 -6.3 L822.7 -1.9" stroke-linecap="round"/><path d="M824.9 1.3 H842.2 V5.1 H824.9 Z M830.2 1.3 V-3 H842.2 V1.3 M835.8 -3 V-7 H842.2 V-3"/><path d="M847.8 -5.1 H855.7 L851.75 -1.0 Z" fill="#111" stroke="none"/></svg>
<div class="t" style="left:910.0px;top:470.4px;font-size:15px;line-height:15px;color:#1B202B;letter-spacing:-0.142px;">New testing</div>
<div class="t" style="left:1427.0px;top:470.1px;font-size:15px;line-height:15px;font-weight:700;color:#F01010;">A</div>
<div class="a" style="left:1463px;top:469.6px;width:25px;height:19px;border-radius:10px;background:#E8F4FD;box-shadow:0 1px 2px rgba(0,0,0,0.08)"></div>
<div class="t" style="left:1463.0px;top:471.4px;font-size:15px;line-height:15px;color:#4BA3E3;width:25px;text-align:center;">2</div>
<svg style="left:1498px;top:465.10px" width="130" height="28" viewBox="1498 -14 130 28" fill="none" stroke-linecap="round" stroke-linejoin="round"><circle cx="1511.6" cy="-0.3" r="7.45" stroke="#1A1D29" stroke-width="1.9"/><path d="M1511.75 -4.6 V-0.5 L1515.6 2.4" stroke="#1A1D29" stroke-width="1.9"/><rect x="1542.4" y="-6.3" width="10.4" height="6" rx="3" transform="rotate(-45 1547.6 -3.3)" stroke="#111827" stroke-width="2.3"/><rect x="1535.4" y="-0.65" width="10.4" height="6" rx="3" transform="rotate(-45 1540.6 2.35)" stroke="#111827" stroke-width="2.3"/><circle cx="1576.6" cy="-0.6" r="7.45" fill="#EBDDD2" stroke="#A3836D" stroke-width="1.5"/><path d="M1573.3 -0.5 L1575.7 1.6 L1579.8 -2.6" stroke="#8E6F5A" stroke-width="1.5"/><path d="M1615.5 -4.8 H1619 A2 2 0 0 1 1621 -2.8 V5.9 A1.9 1.9 0 0 1 1619.1 7.8 H1612.4 A1.9 1.9 0 0 1 1610.5 5.9" stroke="#1A1D29" stroke-width="1.5"/><path d="M1616.4 -1.9 H1618.3 M1616.4 0.9 H1618.3 M1616.4 3.6 H1618.3" stroke="#1A1D29" stroke-width="1.4"/><rect x="1604.9" y="-8" width="9.9" height="12.8" rx="2" fill="#fff" stroke="#1A1D29" stroke-width="1.5"/><path d="M1607.4 -4.6 H1612.6 M1607.4 -1.9 H1612.6 M1607.4 0.9 H1609.6" stroke="#1A1D29" stroke-width="1.4"/></svg>
<svg style="left:1646px;top:471.1px;" width="15" height="16" viewBox="0 0 15 16" fill="none" stroke="#1A1D29" stroke-width="1.7" stroke-linecap="round" stroke-linejoin="round"><path d="M1 3.5 H14"/><path d="M2.5 3.5 L3.3 13.5 A1.5 1.5 0 0 0 4.8 15 H10.2 A1.5 1.5 0 0 0 11.7 13.5 L12.5 3.5"/><path d="M5 3.5 V1.8 A.8 .8 0 0 1 5.8 1 H9.2 A.8 .8 0 0 1 10 1.8 V3.5"/></svg>
<svg style="left:1668px;top:469.10px" width="20" height="20" viewBox="1668 -10 20 20" fill="#1A1D29"><circle cx="1678.3" cy="-5.3" r="2.3"/><circle cx="1678.3" cy="0" r="2.3"/><circle cx="1678.3" cy="5.3" r="2.3"/></svg>
<div class="t" style="left:1661.0px;top:470.4px;font-size:15px;line-height:15px;color:#1B202B;width:200px;text-align:center;letter-spacing:-0.119px;">Automation</div>
<div class="t" style="left:1875.5px;top:470.4px;font-size:15px;line-height:15px;color:#1B202B;">Mo</div>
<div class="a" style="left:594px;top:554px;width:1295px;height:1px;background:#E9EBEF"></div>
<svg style="left:615px;top:520px" width="20" height="20" viewBox="615 -10 20 20" fill="#5B6577"><circle cx="621.75" cy="-5.75" r="1.7"/><circle cx="627.4" cy="-5.75" r="1.7"/><circle cx="621.75" cy="0" r="1.7"/><circle cx="627.4" cy="0" r="1.7"/><circle cx="621.75" cy="5.75" r="1.7"/><circle cx="627.4" cy="5.75" r="1.7"/></svg>
<div class="a" style="left:649px;top:521.95px;width:16px;height:16px;border:1px solid #A3AAB6;border-radius:3px;background:#fff"></div>
<div class="t" style="left:688.0px;top:520.7px;font-size:15px;line-height:15px;color:#1B202B;letter-spacing:-0.8px;">TC0014</div>
<svg style="left:815px;top:514.45px" width="45" height="30" viewBox="815 -15 45 30" fill="none" stroke="#3F49B2" stroke-width="1.3" stroke-linejoin="round"><circle cx="828.9" cy="-8.8" r="3.4"/><path d="M826.4 -6.3 L822.7 -1.9" stroke-linecap="round"/><path d="M824.9 1.3 H842.2 V5.1 H824.9 Z M830.2 1.3 V-3 H842.2 V1.3 M835.8 -3 V-7 H842.2 V-3"/><path d="M847.8 -5.1 H855.7 L851.75 -1.0 Z" fill="#111" stroke="none"/></svg>
<div class="t" style="left:911.1px;top:520.7px;font-size:15px;line-height:15px;color:#1B202B;letter-spacing:-0.252px;">Verify the blog text is clickable</div>
<div class="t" style="left:1426.0px;top:520.4px;font-size:15px;line-height:15px;font-weight:700;color:#1A0FE8;">M</div>
<div class="a" style="left:1463px;top:519.95px;width:25px;height:19px;border-radius:10px;background:#E8F4FD;box-shadow:0 1px 2px rgba(0,0,0,0.08)"></div>
<div class="t" style="left:1463.0px;top:521.7px;font-size:15px;line-height:15px;color:#4BA3E3;width:25px;text-align:center;">4</div>
<svg style="left:1498px;top:515.45px" width="130" height="28" viewBox="1498 -14 130 28" fill="none" stroke-linecap="round" stroke-linejoin="round"><circle cx="1511.6" cy="-0.3" r="7.45" stroke="#1A1D29" stroke-width="1.9"/><path d="M1511.75 -4.6 V-0.5 L1515.6 2.4" stroke="#1A1D29" stroke-width="1.9"/><rect x="1542.4" y="-6.3" width="10.4" height="6" rx="3" transform="rotate(-45 1547.6 -3.3)" stroke="#111827" stroke-width="2.3"/><rect x="1535.4" y="-0.65" width="10.4" height="6" rx="3" transform="rotate(-45 1540.6 2.35)" stroke="#111827" stroke-width="2.3"/><circle cx="1576.6" cy="-0.6" r="7.45" fill="#FDE1E2" stroke="#E5484D" stroke-width="1.5"/><path d="M1574.2 -3 L1579 1.8 M1579 -3 L1574.2 1.8" stroke="#E5484D" stroke-width="1.4"/><path d="M1615.5 -4.8 H1619 A2 2 0 0 1 1621 -2.8 V5.9 A1.9 1.9 0 0 1 1619.1 7.8 H1612.4 A1.9 1.9 0 0 1 1610.5 5.9" stroke="#1A1D29" stroke-width="1.5"/><path d="M1616.4 -1.9 H1618.3 M1616.4 0.9 H1618.3 M1616.4 3.6 H1618.3" stroke="#1A1D29" stroke-width="1.4"/><rect x="1604.9" y="-8" width="9.9" height="12.8" rx="2" fill="#fff" stroke="#1A1D29" stroke-width="1.5"/><path d="M1607.4 -4.6 H1612.6 M1607.4 -1.9 H1612.6 M1607.4 0.9 H1609.6" stroke="#1A1D29" stroke-width="1.4"/></svg>
<svg style="left:1646px;top:521.45px;" width="15" height="16" viewBox="0 0 15 16" fill="none" stroke="#1A1D29" stroke-width="1.7" stroke-linecap="round" stroke-linejoin="round"><path d="M1 3.5 H14"/><path d="M2.5 3.5 L3.3 13.5 A1.5 1.5 0 0 0 4.8 15 H10.2 A1.5 1.5 0 0 0 11.7 13.5 L12.5 3.5"/><path d="M5 3.5 V1.8 A.8 .8 0 0 1 5.8 1 H9.2 A.8 .8 0 0 1 10 1.8 V3.5"/></svg>
<svg style="left:1668px;top:519.45px" width="20" height="20" viewBox="1668 -10 20 20" fill="#1A1D29"><circle cx="1678.3" cy="-5.3" r="2.3"/><circle cx="1678.3" cy="0" r="2.3"/><circle cx="1678.3" cy="5.3" r="2.3"/></svg>
<div class="t" style="left:1661.0px;top:520.7px;font-size:15px;line-height:15px;color:#1B202B;width:200px;text-align:center;letter-spacing:-0.119px;">Automation</div>
<div class="t" style="left:1875.5px;top:520.7px;font-size:15px;line-height:15px;color:#1B202B;">Mo</div>
<div class="a" style="left:594px;top:604px;width:1295px;height:1px;background:#E9EBEF"></div>
<svg style="left:615px;top:570px" width="20" height="20" viewBox="615 -10 20 20" fill="#5B6577"><circle cx="621.75" cy="-5.75" r="1.7"/><circle cx="627.4" cy="-5.75" r="1.7"/><circle cx="621.75" cy="0" r="1.7"/><circle cx="627.4" cy="0" r="1.7"/><circle cx="621.75" cy="5.75" r="1.7"/><circle cx="627.4" cy="5.75" r="1.7"/></svg>
<div class="a" style="left:649px;top:572.1px;width:16px;height:16px;border:1px solid #A3AAB6;border-radius:3px;background:#fff"></div>
<div class="t" style="left:688.0px;top:570.9px;font-size:15px;line-height:15px;color:#1B202B;letter-spacing:-0.775px;">TC0016</div>
<svg style="left:815px;top:564.60px" width="45" height="30" viewBox="815 -15 45 30" fill="none" stroke="#3F49B2" stroke-width="1.3" stroke-linejoin="round"><circle cx="828.9" cy="-8.8" r="3.4"/><path d="M826.4 -6.3 L822.7 -1.9" stroke-linecap="round"/><path d="M824.9 1.3 H842.2 V5.1 H824.9 Z M830.2 1.3 V-3 H842.2 V1.3 M835.8 -3 V-7 H842.2 V-3"/><path d="M847.8 -5.1 H855.7 L851.75 -1.0 Z" fill="#111" stroke="none"/></svg>
<div class="t" style="left:911.1px;top:570.9px;font-size:15px;line-height:15px;color:#1B202B;letter-spacing:-0.272px;">Verify the signup text is clickable</div>
<div class="t" style="left:1426.0px;top:570.6px;font-size:15px;line-height:15px;font-weight:700;color:#1A0FE8;">M</div>
<div class="a" style="left:1463px;top:570.1px;width:25px;height:19px;border-radius:10px;background:#E8F4FD;box-shadow:0 1px 2px rgba(0,0,0,0.08)"></div>
<div class="t" style="left:1463.0px;top:571.9px;font-size:15px;line-height:15px;color:#4BA3E3;width:25px;text-align:center;">4</div>
<svg style="left:1498px;top:565.60px" width="130" height="28" viewBox="1498 -14 130 28" fill="none" stroke-linecap="round" stroke-linejoin="round"><circle cx="1511.6" cy="-0.3" r="7.45" stroke="#1A1D29" stroke-width="1.9"/><path d="M1511.75 -4.6 V-0.5 L1515.6 2.4" stroke="#1A1D29" stroke-width="1.9"/><rect x="1542.4" y="-6.3" width="10.4" height="6" rx="3" transform="rotate(-45 1547.6 -3.3)" stroke="#111827" stroke-width="2.3"/><rect x="1535.4" y="-0.65" width="10.4" height="6" rx="3" transform="rotate(-45 1540.6 2.35)" stroke="#111827" stroke-width="2.3"/><circle cx="1576.6" cy="-0.6" r="7.45" fill="#DDF7E5" stroke="#39B56A" stroke-width="1.5"/><path d="M1573.3 -0.5 L1575.7 1.6 L1579.8 -2.6" stroke="#2EA85C" stroke-width="1.5"/><path d="M1615.5 -4.8 H1619 A2 2 0 0 1 1621 -2.8 V5.9 A1.9 1.9 0 0 1 1619.1 7.8 H1612.4 A1.9 1.9 0 0 1 1610.5 5.9" stroke="#1A1D29" stroke-width="1.5"/><path d="M1616.4 -1.9 H1618.3 M1616.4 0.9 H1618.3 M1616.4 3.6 H1618.3" stroke="#1A1D29" stroke-width="1.4"/><rect x="1604.9" y="-8" width="9.9" height="12.8" rx="2" fill="#fff" stroke="#1A1D29" stroke-width="1.5"/><path d="M1607.4 -4.6 H1612.6 M1607.4 -1.9 H1612.6 M1607.4 0.9 H1609.6" stroke="#1A1D29" stroke-width="1.4"/></svg>
<svg style="left:1646px;top:571.6px;" width="15" height="16" viewBox="0 0 15 16" fill="none" stroke="#1A1D29" stroke-width="1.7" stroke-linecap="round" stroke-linejoin="round"><path d="M1 3.5 H14"/><path d="M2.5 3.5 L3.3 13.5 A1.5 1.5 0 0 0 4.8 15 H10.2 A1.5 1.5 0 0 0 11.7 13.5 L12.5 3.5"/><path d="M5 3.5 V1.8 A.8 .8 0 0 1 5.8 1 H9.2 A.8 .8 0 0 1 10 1.8 V3.5"/></svg>
<svg style="left:1668px;top:569.60px" width="20" height="20" viewBox="1668 -10 20 20" fill="#1A1D29"><circle cx="1678.3" cy="-5.3" r="2.3"/><circle cx="1678.3" cy="0" r="2.3"/><circle cx="1678.3" cy="5.3" r="2.3"/></svg>
<div class="t" style="left:1661.0px;top:570.9px;font-size:15px;line-height:15px;color:#1B202B;width:200px;text-align:center;letter-spacing:-0.119px;">Automation</div>
<div class="t" style="left:1878.3px;top:570.9px;font-size:15px;line-height:15px;color:#1B202B;">Cr</div>
<div class="a" style="left:594px;top:650px;width:1295px;height:1px;background:#E9EBEF"></div>
<svg style="left:615px;top:618px" width="20" height="20" viewBox="615 -10 20 20" fill="#5B6577"><circle cx="621.75" cy="-5.75" r="1.7"/><circle cx="627.4" cy="-5.75" r="1.7"/><circle cx="621.75" cy="0" r="1.7"/><circle cx="627.4" cy="0" r="1.7"/><circle cx="621.75" cy="5.75" r="1.7"/><circle cx="627.4" cy="5.75" r="1.7"/></svg>
<div class="a" style="left:649px;top:620.1px;width:16px;height:16px;border:1px solid #A3AAB6;border-radius:3px;background:#fff"></div>
<div class="t" style="left:688.0px;top:618.9px;font-size:15px;line-height:15px;color:#1B202B;letter-spacing:-0.775px;">TC0056</div>
<svg style="left:815px;top:612.60px" width="35" height="30" viewBox="815 -15 35 30" fill="none" stroke="#77B543" stroke-width="1.25"><circle cx="828.15" cy="-3.65" r="5.75"/><circle cx="836.75" cy="-3.65" r="5.75"/><circle cx="832.6" cy="3.75" r="5.75"/></svg>
<div class="t" style="left:910.0px;top:618.9px;font-size:15px;line-height:15px;color:#1B202B;letter-spacing:-0.154px;">Functionality Testing</div>
<svg style="left:1498px;top:613.60px" width="130" height="28" viewBox="1498 -14 130 28" fill="none" stroke-linecap="round" stroke-linejoin="round"><circle cx="1511.6" cy="-0.3" r="7.45" stroke="#1A1D29" stroke-width="1.9"/><path d="M1511.75 -4.6 V-0.5 L1515.6 2.4" stroke="#1A1D29" stroke-width="1.9"/><rect x="1542.4" y="-6.3" width="10.4" height="6" rx="3" transform="rotate(-45 1547.6 -3.3)" stroke="#111827" stroke-width="2.3"/><rect x="1535.4" y="-0.65" width="10.4" height="6" rx="3" transform="rotate(-45 1540.6 2.35)" stroke="#111827" stroke-width="2.3"/><circle cx="1576.6" cy="-0.6" r="7.45" fill="#DDF7E5" stroke="#39B56A" stroke-width="1.5"/><path d="M1573.3 -0.5 L1575.7 1.6 L1579.8 -2.6" stroke="#2EA85C" stroke-width="1.5"/><path d="M1615.5 -4.8 H1619 A2 2 0 0 1 1621 -2.8 V5.9 A1.9 1.9 0 0 1 1619.1 7.8 H1612.4 A1.9 1.9 0 0 1 1610.5 5.9" stroke="#1A1D29" stroke-width="1.5"/><path d="M1616.4 -1.9 H1618.3 M1616.4 0.9 H1618.3 M1616.4 3.6 H1618.3" stroke="#1A1D29" stroke-width="1.4"/><rect x="1604.9" y="-8" width="9.9" height="12.8" rx="2" fill="#fff" stroke="#1A1D29" stroke-width="1.5"/><path d="M1607.4 -4.6 H1612.6 M1607.4 -1.9 H1612.6 M1607.4 0.9 H1609.6" stroke="#1A1D29" stroke-width="1.4"/></svg>
<svg style="left:1646px;top:619.6px;" width="15" height="16" viewBox="0 0 15 16" fill="none" stroke="#1A1D29" stroke-width="1.7" stroke-linecap="round" stroke-linejoin="round"><path d="M1 3.5 H14"/><path d="M2.5 3.5 L3.3 13.5 A1.5 1.5 0 0 0 4.8 15 H10.2 A1.5 1.5 0 0 0 11.7 13.5 L12.5 3.5"/><path d="M5 3.5 V1.8 A.8 .8 0 0 1 5.8 1 H9.2 A.8 .8 0 0 1 10 1.8 V3.5"/></svg>
<svg style="left:1668px;top:617.60px" width="20" height="20" viewBox="1668 -10 20 20" fill="#1A1D29"><circle cx="1678.3" cy="-5.3" r="2.3"/><circle cx="1678.3" cy="0" r="2.3"/><circle cx="1678.3" cy="5.3" r="2.3"/></svg>
<div class="t" style="left:1661.0px;top:618.9px;font-size:15px;line-height:15px;color:#1B202B;width:200px;text-align:center;letter-spacing:-0.119px;">Automation</div>
<div class="t" style="left:1878.3px;top:618.9px;font-size:15px;line-height:15px;color:#1B202B;">Cr</div>
<div class="a" style="left:594px;top:696px;width:1295px;height:1px;background:#E9EBEF"></div>
<svg style="left:615px;top:664px" width="20" height="20" viewBox="615 -10 20 20" fill="#5B6577"><circle cx="621.75" cy="-5.75" r="1.7"/><circle cx="627.4" cy="-5.75" r="1.7"/><circle cx="621.75" cy="0" r="1.7"/><circle cx="627.4" cy="0" r="1.7"/><circle cx="621.75" cy="5.75" r="1.7"/><circle cx="627.4" cy="5.75" r="1.7"/></svg>
<div class="a" style="left:649px;top:665.95px;width:16px;height:16px;border:1px solid #A3AAB6;border-radius:3px;background:#fff"></div>
<div class="t" style="left:688.0px;top:664.7px;font-size:15px;line-height:15px;color:#1B202B;letter-spacing:-0.75px;">TC0057</div>
<svg style="left:815px;top:658.45px" width="35" height="30" viewBox="815 -15 35 30" fill="none" stroke="#77B543" stroke-width="1.25"><circle cx="828.15" cy="-3.65" r="5.75"/><circle cx="836.75" cy="-3.65" r="5.75"/><circle cx="832.6" cy="3.75" r="5.75"/></svg>
<div class="t" style="left:910.5px;top:664.7px;font-size:15px;line-height:15px;color:#1B202B;letter-spacing:-0.383px;">Check login</div>
<svg style="left:1498px;top:659.45px" width="130" height="28" viewBox="1498 -14 130 28" fill="none" stroke-linecap="round" stroke-linejoin="round"><circle cx="1511.6" cy="-0.3" r="7.45" stroke="#1A1D29" stroke-width="1.9"/><path d="M1511.75 -4.6 V-0.5 L1515.6 2.4" stroke="#1A1D29" stroke-width="1.9"/><rect x="1542.4" y="-6.3" width="10.4" height="6" rx="3" transform="rotate(-45 1547.6 -3.3)" stroke="#111827" stroke-width="2.3"/><rect x="1535.4" y="-0.65" width="10.4" height="6" rx="3" transform="rotate(-45 1540.6 2.35)" stroke="#111827" stroke-width="2.3"/><circle cx="1576.6" cy="-0.6" r="7.45" fill="#DDF7E5" stroke="#39B56A" stroke-width="1.5"/><path d="M1573.3 -0.5 L1575.7 1.6 L1579.8 -2.6" stroke="#2EA85C" stroke-width="1.5"/><path d="M1615.5 -4.8 H1619 A2 2 0 0 1 1621 -2.8 V5.9 A1.9 1.9 0 0 1 1619.1 7.8 H1612.4 A1.9 1.9 0 0 1 1610.5 5.9" stroke="#1A1D29" stroke-width="1.5"/><path d="M1616.4 -1.9 H1618.3 M1616.4 0.9 H1618.3 M1616.4 3.6 H1618.3" stroke="#1A1D29" stroke-width="1.4"/><rect x="1604.9" y="-8" width="9.9" height="12.8" rx="2" fill="#fff" stroke="#1A1D29" stroke-width="1.5"/><path d="M1607.4 -4.6 H1612.6 M1607.4 -1.9 H1612.6 M1607.4 0.9 H1609.6" stroke="#1A1D29" stroke-width="1.4"/></svg>
<svg style="left:1646px;top:665.45px;" width="15" height="16" viewBox="0 0 15 16" fill="none" stroke="#1A1D29" stroke-width="1.7" stroke-linecap="round" stroke-linejoin="round"><path d="M1 3.5 H14"/><path d="M2.5 3.5 L3.3 13.5 A1.5 1.5 0 0 0 4.8 15 H10.2 A1.5 1.5 0 0 0 11.7 13.5 L12.5 3.5"/><path d="M5 3.5 V1.8 A.8 .8 0 0 1 5.8 1 H9.2 A.8 .8 0 0 1 10 1.8 V3.5"/></svg>
<svg style="left:1668px;top:663.45px" width="20" height="20" viewBox="1668 -10 20 20" fill="#1A1D29"><circle cx="1678.3" cy="-5.3" r="2.3"/><circle cx="1678.3" cy="0" r="2.3"/><circle cx="1678.3" cy="5.3" r="2.3"/></svg>
<div class="t" style="left:1661.0px;top:664.7px;font-size:15px;line-height:15px;color:#1B202B;width:200px;text-align:center;letter-spacing:-0.119px;">Automation</div>
<div class="t" style="left:1878.3px;top:664.7px;font-size:15px;line-height:15px;color:#1B202B;">Cr</div>
<div class="a" style="left:594px;top:742px;width:1295px;height:1px;background:#E9EBEF"></div>
<svg style="left:615px;top:710px" width="20" height="20" viewBox="615 -10 20 20" fill="#5B6577"><circle cx="621.75" cy="-5.75" r="1.7"/><circle cx="627.4" cy="-5.75" r="1.7"/><circle cx="621.75" cy="0" r="1.7"/><circle cx="627.4" cy="0" r="1.7"/><circle cx="621.75" cy="5.75" r="1.7"/><circle cx="627.4" cy="5.75" r="1.7"/></svg>
<div class="a" style="left:649px;top:711.95px;width:16px;height:16px;border:1px solid #A3AAB6;border-radius:3px;background:#fff"></div>
<div class="t" style="left:688.0px;top:710.7px;font-size:15px;line-height:15px;color:#1B202B;letter-spacing:-0.75px;">TC0059</div>
<svg style="left:815px;top:704.45px" width="35" height="30" viewBox="815 -15 35 30" fill="none" stroke="#77B543" stroke-width="1.25"><circle cx="828.15" cy="-3.65" r="5.75"/><circle cx="836.75" cy="-3.65" r="5.75"/><circle cx="832.6" cy="3.75" r="5.75"/></svg>
<div class="t" style="left:910.5px;top:710.7px;font-size:15px;line-height:15px;color:#1B202B;letter-spacing:-0.296px;">Check Login functionality</div>
<svg style="left:1498px;top:705.45px" width="130" height="28" viewBox="1498 -14 130 28" fill="none" stroke-linecap="round" stroke-linejoin="round"><circle cx="1511.6" cy="-0.3" r="7.45" stroke="#1A1D29" stroke-width="1.9"/><path d="M1511.75 -4.6 V-0.5 L1515.6 2.4" stroke="#1A1D29" stroke-width="1.9"/><rect x="1542.4" y="-6.3" width="10.4" height="6" rx="3" transform="rotate(-45 1547.6 -3.3)" stroke="#111827" stroke-width="2.3"/><rect x="1535.4" y="-0.65" width="10.4" height="6" rx="3" transform="rotate(-45 1540.6 2.35)" stroke="#111827" stroke-width="2.3"/><circle cx="1576.6" cy="-0.6" r="7.45" fill="#DDF7E5" stroke="#39B56A" stroke-width="1.5"/><path d="M1573.3 -0.5 L1575.7 1.6 L1579.8 -2.6" stroke="#2EA85C" stroke-width="1.5"/><path d="M1615.5 -4.8 H1619 A2 2 0 0 1 1621 -2.8 V5.9 A1.9 1.9 0 0 1 1619.1 7.8 H1612.4 A1.9 1.9 0 0 1 1610.5 5.9" stroke="#1A1D29" stroke-width="1.5"/><path d="M1616.4 -1.9 H1618.3 M1616.4 0.9 H1618.3 M1616.4 3.6 H1618.3" stroke="#1A1D29" stroke-width="1.4"/><rect x="1604.9" y="-8" width="9.9" height="12.8" rx="2" fill="#fff" stroke="#1A1D29" stroke-width="1.5"/><path d="M1607.4 -4.6 H1612.6 M1607.4 -1.9 H1612.6 M1607.4 0.9 H1609.6" stroke="#1A1D29" stroke-width="1.4"/></svg>
<svg style="left:1646px;top:711.45px;" width="15" height="16" viewBox="0 0 15 16" fill="none" stroke="#1A1D29" stroke-width="1.7" stroke-linecap="round" stroke-linejoin="round"><path d="M1 3.5 H14"/><path d="M2.5 3.5 L3.3 13.5 A1.5 1.5 0 0 0 4.8 15 H10.2 A1.5 1.5 0 0 0 11.7 13.5 L12.5 3.5"/><path d="M5 3.5 V1.8 A.8 .8 0 0 1 5.8 1 H9.2 A.8 .8 0 0 1 10 1.8 V3.5"/></svg>
<svg style="left:1668px;top:709.45px" width="20" height="20" viewBox="1668 -10 20 20" fill="#1A1D29"><circle cx="1678.3" cy="-5.3" r="2.3"/><circle cx="1678.3" cy="0" r="2.3"/><circle cx="1678.3" cy="5.3" r="2.3"/></svg>
<div class="t" style="left:1661.0px;top:710.7px;font-size:15px;line-height:15px;color:#1B202B;width:200px;text-align:center;letter-spacing:-0.119px;">Automation</div>
<div class="t" style="left:1878.3px;top:710.7px;font-size:15px;line-height:15px;color:#1B202B;">Cr</div>
<div class="a" style="left:594px;top:792px;width:1295px;height:1px;background:#E9EBEF"></div>
<svg style="left:615px;top:758px" width="20" height="20" viewBox="615 -10 20 20" fill="#5B6577"><circle cx="621.75" cy="-5.75" r="1.7"/><circle cx="627.4" cy="-5.75" r="1.7"/><circle cx="621.75" cy="0" r="1.7"/><circle cx="627.4" cy="0" r="1.7"/><circle cx="621.75" cy="5.75" r="1.7"/><circle cx="627.4" cy="5.75" r="1.7"/></svg>
<div class="a" style="left:649px;top:759.95px;width:16px;height:16px;border:1px solid #A3AAB6;border-radius:3px;background:#fff"></div>
<div class="t" style="left:688.0px;top:758.7px;font-size:15px;line-height:15px;color:#1B202B;letter-spacing:-0.75px;">TC0061</div>
<svg style="left:815px;top:752.45px" width="45" height="30" viewBox="815 -15 45 30" fill="none" stroke="#3F49B2" stroke-width="1.3" stroke-linejoin="round"><circle cx="828.9" cy="-8.8" r="3.4"/><path d="M826.4 -6.3 L822.7 -1.9" stroke-linecap="round"/><path d="M824.9 1.3 H842.2 V5.1 H824.9 Z M830.2 1.3 V-3 H842.2 V1.3 M835.8 -3 V-7 H842.2 V-3"/><path d="M847.8 -5.1 H855.7 L851.75 -1.0 Z" fill="#111" stroke="none"/></svg>
<div class="t" style="left:911.1px;top:758.7px;font-size:15px;line-height:15px;color:#1B202B;letter-spacing:-0.353px;">Verify the login page</div>
<div class="a" style="left:1463px;top:757.95px;width:25px;height:19px;border-radius:10px;background:#E8F4FD;box-shadow:0 1px 2px rgba(0,0,0,0.08)"></div>
<div class="t" style="left:1463.0px;top:759.7px;font-size:15px;line-height:15px;color:#4BA3E3;width:25px;text-align:center;">4</div>
<svg style="left:1498px;top:753.45px" width="130" height="28" viewBox="1498 -14 130 28" fill="none" stroke-linecap="round" stroke-linejoin="round"><circle cx="1511.6" cy="-0.3" r="7.45" stroke="#1A1D29" stroke-width="1.9"/><path d="M1511.75 -4.6 V-0.5 L1515.6 2.4" stroke="#1A1D29" stroke-width="1.9"/><rect x="1542.4" y="-6.3" width="10.4" height="6" rx="3" transform="rotate(-45 1547.6 -3.3)" stroke="#111827" stroke-width="2.3"/><rect x="1535.4" y="-0.65" width="10.4" height="6" rx="3" transform="rotate(-45 1540.6 2.35)" stroke="#111827" stroke-width="2.3"/><circle cx="1576.6" cy="-0.6" r="7.45" fill="#EBDDD2" stroke="#A3836D" stroke-width="1.5"/><path d="M1573.3 -0.5 L1575.7 1.6 L1579.8 -2.6" stroke="#8E6F5A" stroke-width="1.5"/><path d="M1615.5 -4.8 H1619 A2 2 0 0 1 1621 -2.8 V5.9 A1.9 1.9 0 0 1 1619.1 7.8 H1612.4 A1.9 1.9 0 0 1 1610.5 5.9" stroke="#1A1D29" stroke-width="1.5"/><path d="M1616.4 -1.9 H1618.3 M1616.4 0.9 H1618.3 M1616.4 3.6 H1618.3" stroke="#1A1D29" stroke-width="1.4"/><rect x="1604.9" y="-8" width="9.9" height="12.8" rx="2" fill="#fff" stroke="#1A1D29" stroke-width="1.5"/><path d="M1607.4 -4.6 H1612.6 M1607.4 -1.9 H1612.6 M1607.4 0.9 H1609.6" stroke="#1A1D29" stroke-width="1.4"/></svg>
<svg style="left:1646px;top:759.45px;" width="15" height="16" viewBox="0 0 15 16" fill="none" stroke="#1A1D29" stroke-width="1.7" stroke-linecap="round" stroke-linejoin="round"><path d="M1 3.5 H14"/><path d="M2.5 3.5 L3.3 13.5 A1.5 1.5 0 0 0 4.8 15 H10.2 A1.5 1.5 0 0 0 11.7 13.5 L12.5 3.5"/><path d="M5 3.5 V1.8 A.8 .8 0 0 1 5.8 1 H9.2 A.8 .8 0 0 1 10 1.8 V3.5"/></svg>
<svg style="left:1668px;top:757.45px" width="20" height="20" viewBox="1668 -10 20 20" fill="#1A1D29"><circle cx="1678.3" cy="-5.3" r="2.3"/><circle cx="1678.3" cy="0" r="2.3"/><circle cx="1678.3" cy="5.3" r="2.3"/></svg>
<div class="t" style="left:1661.0px;top:758.7px;font-size:15px;line-height:15px;color:#1B202B;width:200px;text-align:center;letter-spacing:-0.261px;">Acceptance</div>
<div class="t" style="left:1878.3px;top:758.7px;font-size:15px;line-height:15px;color:#1B202B;">Cr</div>
<div class="a" style="left:594px;top:842px;width:1295px;height:1px;background:#E9EBEF"></div>
<svg style="left:615px;top:808px" width="20" height="20" viewBox="615 -10 20 20" fill="#5B6577"><circle cx="621.75" cy="-5.75" r="1.7"/><circle cx="627.4" cy="-5.75" r="1.7"/><circle cx="621.75" cy="0" r="1.7"/><circle cx="627.4" cy="0" r="1.7"/><circle cx="621.75" cy="5.75" r="1.7"/><circle cx="627.4" cy="5.75" r="1.7"/></svg>
<div class="a" style="left:649px;top:809.7px;width:16px;height:16px;border:1px solid #A3AAB6;border-radius:3px;background:#fff"></div>
<div class="t" style="left:688.0px;top:808.5px;font-size:15px;line-height:15px;color:#1B202B;letter-spacing:-0.775px;">TC0066</div>
<svg style="left:815px;top:802.20px" width="45" height="30" viewBox="815 -15 45 30" fill="none" stroke="#3F49B2" stroke-width="1.3" stroke-linejoin="round"><circle cx="828.9" cy="-8.8" r="3.4"/><path d="M826.4 -6.3 L822.7 -1.9" stroke-linecap="round"/><path d="M824.9 1.3 H842.2 V5.1 H824.9 Z M830.2 1.3 V-3 H842.2 V1.3 M835.8 -3 V-7 H842.2 V-3"/><path d="M847.8 -5.1 H855.7 L851.75 -1.0 Z" fill="#111" stroke="none"/></svg>
<div class="t" style="left:910.8px;top:808.5px;font-size:15px;line-height:15px;color:#1B202B;letter-spacing:-0.263px;">Testing 2 345</div>
<div class="t" style="left:1426.0px;top:808.2px;font-size:15px;line-height:15px;font-weight:700;color:#1A0FE8;">M</div>
<div class="a" style="left:1463px;top:807.7px;width:25px;height:19px;border-radius:10px;background:#E8F4FD;box-shadow:0 1px 2px rgba(0,0,0,0.08)"></div>
<div class="t" style="left:1463.0px;top:809.5px;font-size:15px;line-height:15px;color:#4BA3E3;width:25px;text-align:center;">1</div>
<svg style="left:1498px;top:803.20px" width="130" height="28" viewBox="1498 -14 130 28" fill="none" stroke-linecap="round" stroke-linejoin="round"><circle cx="1511.6" cy="-0.3" r="7.45" stroke="#1A1D29" stroke-width="1.9"/><path d="M1511.75 -4.6 V-0.5 L1515.6 2.4" stroke="#1A1D29" stroke-width="1.9"/><rect x="1542.4" y="-6.3" width="10.4" height="6" rx="3" transform="rotate(-45 1547.6 -3.3)" stroke="#111827" stroke-width="2.3"/><rect x="1535.4" y="-0.65" width="10.4" height="6" rx="3" transform="rotate(-45 1540.6 2.35)" stroke="#111827" stroke-width="2.3"/><circle cx="1576.6" cy="-0.6" r="7.45" fill="#EBDDD2" stroke="#A3836D" stroke-width="1.5"/><path d="M1573.3 -0.5 L1575.7 1.6 L1579.8 -2.6" stroke="#8E6F5A" stroke-width="1.5"/><path d="M1615.5 -4.8 H1619 A2 2 0 0 1 1621 -2.8 V5.9 A1.9 1.9 0 0 1 1619.1 7.8 H1612.4 A1.9 1.9 0 0 1 1610.5 5.9" stroke="#1A1D29" stroke-width="1.5"/><path d="M1616.4 -1.9 H1618.3 M1616.4 0.9 H1618.3 M1616.4 3.6 H1618.3" stroke="#1A1D29" stroke-width="1.4"/><rect x="1604.9" y="-8" width="9.9" height="12.8" rx="2" fill="#fff" stroke="#1A1D29" stroke-width="1.5"/><path d="M1607.4 -4.6 H1612.6 M1607.4 -1.9 H1612.6 M1607.4 0.9 H1609.6" stroke="#1A1D29" stroke-width="1.4"/></svg>
<svg style="left:1646px;top:809.2px;" width="15" height="16" viewBox="0 0 15 16" fill="none" stroke="#1A1D29" stroke-width="1.7" stroke-linecap="round" stroke-linejoin="round"><path d="M1 3.5 H14"/><path d="M2.5 3.5 L3.3 13.5 A1.5 1.5 0 0 0 4.8 15 H10.2 A1.5 1.5 0 0 0 11.7 13.5 L12.5 3.5"/><path d="M5 3.5 V1.8 A.8 .8 0 0 1 5.8 1 H9.2 A.8 .8 0 0 1 10 1.8 V3.5"/></svg>
<svg style="left:1668px;top:807.20px" width="20" height="20" viewBox="1668 -10 20 20" fill="#1A1D29"><circle cx="1678.3" cy="-5.3" r="2.3"/><circle cx="1678.3" cy="0" r="2.3"/><circle cx="1678.3" cy="5.3" r="2.3"/></svg>
<div class="t" style="left:1661.0px;top:808.5px;font-size:15px;line-height:15px;color:#1B202B;width:200px;text-align:center;letter-spacing:-0.122px;">Functional</div>
<div class="t" style="left:1878.3px;top:808.5px;font-size:15px;line-height:15px;color:#1B202B;">Cr</div>
<svg style="left:615px;top:858px" width="20" height="20" viewBox="615 -10 20 20" fill="#5B6577"><circle cx="621.75" cy="-5.75" r="1.7"/><circle cx="627.4" cy="-5.75" r="1.7"/><circle cx="621.75" cy="0" r="1.7"/><circle cx="627.4" cy="0" r="1.7"/><circle cx="621.75" cy="5.75" r="1.7"/><circle cx="627.4" cy="5.75" r="1.7"/></svg>
<div class="a" style="left:649px;top:860.5px;width:16px;height:16px;border:1px solid #A3AAB6;border-radius:3px;background:#fff"></div>
<div class="t" style="left:688.0px;top:859.3px;font-size:15px;line-height:15px;color:#1B202B;letter-spacing:-0.75px;">TC0067</div>
<svg style="left:815px;top:853.00px" width="45" height="30" viewBox="815 -15 45 30" fill="none" stroke="#3F49B2" stroke-width="1.3" stroke-linejoin="round"><circle cx="828.9" cy="-8.8" r="3.4"/><path d="M826.4 -6.3 L822.7 -1.9" stroke-linecap="round"/><path d="M824.9 1.3 H842.2 V5.1 H824.9 Z M830.2 1.3 V-3 H842.2 V1.3 M835.8 -3 V-7 H842.2 V-3"/><path d="M847.8 -5.1 H855.7 L851.75 -1.0 Z" fill="#111" stroke="none"/></svg>
<div class="t" style="left:910.8px;top:859.3px;font-size:15px;line-height:15px;color:#1B202B;letter-spacing:-0.193px;">Test 355</div>
<div class="t" style="left:1426.0px;top:859.0px;font-size:15px;line-height:15px;font-weight:700;color:#1A0FE8;">M</div>
<div class="a" style="left:1463px;top:858.5px;width:25px;height:19px;border-radius:10px;background:#E8F4FD;box-shadow:0 1px 2px rgba(0,0,0,0.08)"></div>
<div class="t" style="left:1463.0px;top:860.3px;font-size:15px;line-height:15px;color:#4BA3E3;width:25px;text-align:center;">1</div>
<svg style="left:1498px;top:854.00px" width="130" height="28" viewBox="1498 -14 130 28" fill="none" stroke-linecap="round" stroke-linejoin="round"><circle cx="1511.6" cy="-0.3" r="7.45" stroke="#1A1D29" stroke-width="1.9"/><path d="M1511.75 -4.6 V-0.5 L1515.6 2.4" stroke="#1A1D29" stroke-width="1.9"/><rect x="1542.4" y="-6.3" width="10.4" height="6" rx="3" transform="rotate(-45 1547.6 -3.3)" stroke="#111827" stroke-width="2.3"/><rect x="1535.4" y="-0.65" width="10.4" height="6" rx="3" transform="rotate(-45 1540.6 2.35)" stroke="#111827" stroke-width="2.3"/><circle cx="1576.6" cy="-0.6" r="7.45" fill="#EBDDD2" stroke="#A3836D" stroke-width="1.5"/><path d="M1573.3 -0.5 L1575.7 1.6 L1579.8 -2.6" stroke="#8E6F5A" stroke-width="1.5"/><path d="M1615.5 -4.8 H1619 A2 2 0 0 1 1621 -2.8 V5.9 A1.9 1.9 0 0 1 1619.1 7.8 H1612.4 A1.9 1.9 0 0 1 1610.5 5.9" stroke="#1A1D29" stroke-width="1.5"/><path d="M1616.4 -1.9 H1618.3 M1616.4 0.9 H1618.3 M1616.4 3.6 H1618.3" stroke="#1A1D29" stroke-width="1.4"/><rect x="1604.9" y="-8" width="9.9" height="12.8" rx="2" fill="#fff" stroke="#1A1D29" stroke-width="1.5"/><path d="M1607.4 -4.6 H1612.6 M1607.4 -1.9 H1612.6 M1607.4 0.9 H1609.6" stroke="#1A1D29" stroke-width="1.4"/></svg>
<svg style="left:1646px;top:860px;" width="15" height="16" viewBox="0 0 15 16" fill="none" stroke="#1A1D29" stroke-width="1.7" stroke-linecap="round" stroke-linejoin="round"><path d="M1 3.5 H14"/><path d="M2.5 3.5 L3.3 13.5 A1.5 1.5 0 0 0 4.8 15 H10.2 A1.5 1.5 0 0 0 11.7 13.5 L12.5 3.5"/><path d="M5 3.5 V1.8 A.8 .8 0 0 1 5.8 1 H9.2 A.8 .8 0 0 1 10 1.8 V3.5"/></svg>
<svg style="left:1668px;top:858.00px" width="20" height="20" viewBox="1668 -10 20 20" fill="#1A1D29"><circle cx="1678.3" cy="-5.3" r="2.3"/><circle cx="1678.3" cy="0" r="2.3"/><circle cx="1678.3" cy="5.3" r="2.3"/></svg>
<div class="t" style="left:1661.0px;top:859.3px;font-size:15px;line-height:15px;color:#1B202B;width:200px;text-align:center;letter-spacing:-0.261px;">Acceptance</div>
<div class="t" style="left:1878.3px;top:859.3px;font-size:15px;line-height:15px;color:#1B202B;">Cr</div>
<div class="a" style="left:1889px;top:229px;width:27px;height:649px;background:#EBF1F9"></div>
<div class="a" style="left:1011.5px;top:201.5px;width:242px;height:181.5px;background:#fff;box-shadow:0 3px 14px rgba(20,30,60,0.12);border:1px solid #F0F1F6"></div>
<svg style="left:1205px;top:192px" width="20" height="11" viewBox="0 0 20 11"><path d="M0 10.5 L10 1 L20 10.5" fill="#fff" stroke="#ECEEF3" stroke-width="1"/></svg>
<div class="a" style="left:1205px;top:201px;width:20px;height:2px;background:#fff"></div>
<div class="a" style="left:1012px;top:292px;width:241px;height:45px;background:#EEF5FD"></div>
<div class="t" style="left:1057.7px;top:216.0px;font-size:15px;line-height:15px;color:#222937;letter-spacing:-0.141px;">Shareable Test Cases</div>
<svg style="left:1024px;top:212.70px" width="30" height="24" viewBox="1024 -16 30 24" fill="none" stroke="#2F3645" stroke-width="1.1" stroke-linecap="round" stroke-linejoin="round"><rect x="1027.8" y="-11" width="13.5" height="13.5" rx="1.3"/><path d="M1028.4 -7.6 H1040.7" stroke="#B9BEC7" stroke-width="1.3"/><path d="M1029.6 -9.4 h.2 M1031.5 -9.4 h.2 M1033.4 -9.4 h.2 M1038 -9.4 h2" stroke-width="1"/><path d="M1032.3 -5.1 v.9 M1034.3 -5.1 v.9 M1036.3 -5.1 v.9" stroke-width="1.1"/><path d="M1029.4 -2.3 H1039.6" stroke-width="1.3"/><path d="M1029.4 -0.2 H1031.6 L1032.6 0.6 L1033.6 -0.2 H1039.6" stroke="#8D939D" stroke-width="1.2"/><path d="M1041 1.4 L1041.9 -1.9 L1047.6 -9.6 A1.5 1.5 0 0 1 1049.9 -7.9 L1044.2 -0.2 Z" fill="#fff"/><path d="M1042.3 -2.6 L1044.6 -0.9" stroke-width="0.9"/></svg>
<div class="t" style="left:1057.7px;top:259.5px;font-size:15px;line-height:15px;color:#222937;letter-spacing:-0.219px;">Shareable Type Report</div>
<svg style="left:1024px;top:256.20px" width="30" height="26" viewBox="1024 -16 30 26" fill="none" stroke="#2F3645" stroke-width="1.1" stroke-linecap="round" stroke-linejoin="round"><path d="M1035.3 -10 V-13 H1045.3 L1049.2 -9 V7.2 H1035.3 V4.6"/><path d="M1045.3 -13 V-9 H1049.2" stroke="#9AA0A9"/><path d="M1049.2 -9 V7.2" stroke="#8E949E" stroke-width="1.4"/><circle cx="1035.5" cy="-3.2" r="7.4" fill="#fff"/><path d="M1035.5 -10.6 V-3.2 H1042.9" stroke-width="1.4"/><path d="M1035.5 -3.2 L1030.3 1.9"/><path d="M1045.3 -7 H1048 M1045.3 -4.9 H1048 M1045.3 -2.9 H1048" stroke-width="1.1"/><circle cx="1044.3" cy="2.9" r="2.9" fill="#fff"/><path d="M1043 3.1 L1044 4 L1045.6 2.2" stroke-width="0.9"/></svg>
<div class="t" style="left:1057.7px;top:305.3px;font-size:15px;line-height:15px;color:#222937;letter-spacing:-0.115px;">Shareable Priority Report</div>
<svg style="left:1024px;top:302.00px" width="30" height="24" viewBox="1024 -16 30 24" fill="none" stroke="#2F3645" stroke-width="1.1" stroke-linecap="round" stroke-linejoin="round"><rect x="1027.8" y="-11" width="13.5" height="13.5" rx="1.3"/><path d="M1028.4 -7.6 H1040.7" stroke="#B9BEC7" stroke-width="1.3"/><path d="M1029.6 -9.4 h.2 M1031.5 -9.4 h.2 M1033.4 -9.4 h.2 M1038 -9.4 h2" stroke-width="1"/><path d="M1032.3 -5.1 v.9 M1034.3 -5.1 v.9 M1036.3 -5.1 v.9" stroke-width="1.1"/><path d="M1029.4 -2.3 H1039.6" stroke-width="1.3"/><path d="M1029.4 -0.2 H1031.6 L1032.6 0.6 L1033.6 -0.2 H1039.6" stroke="#8D939D" stroke-width="1.2"/><path d="M1041 1.4 L1041.9 -1.9 L1047.6 -9.6 A1.5 1.5 0 0 1 1049.9 -7.9 L1044.2 -0.2 Z" fill="#fff"/><path d="M1042.3 -2.6 L1044.6 -0.9" stroke-width="0.9"/></svg>
<div class="t" style="left:1057.7px;top:349.8px;font-size:15px;line-height:15px;color:#222937;letter-spacing:-0.12px;">Shareable TestSuite Report</div>
<svg style="left:1024px;top:346.50px" width="30" height="26" viewBox="1024 -16 30 26" fill="none" stroke="#2F3645" stroke-width="1.1" stroke-linecap="round" stroke-linejoin="round"><path d="M1035.3 -10 V-13 H1045.3 L1049.2 -9 V7.2 H1035.3 V4.6"/><path d="M1045.3 -13 V-9 H1049.2" stroke="#9AA0A9"/><path d="M1049.2 -9 V7.2" stroke="#8E949E" stroke-width="1.4"/><circle cx="1035.5" cy="-3.2" r="7.4" fill="#fff"/><path d="M1035.5 -10.6 V-3.2 H1042.9" stroke-width="1.4"/><path d="M1035.5 -3.2 L1030.3 1.9"/><path d="M1045.3 -7 H1048 M1045.3 -4.9 H1048 M1045.3 -2.9 H1048" stroke-width="1.1"/><circle cx="1044.3" cy="2.9" r="2.9" fill="#fff"/><path d="M1043 3.1 L1044 4 L1045.6 2.2" stroke-width="0.9"/></svg>
<div class="a" style="left:1258px;top:257.8px;width:200px;height:112.8px;background:#000;border-radius:5px"></div>
<svg style="left:1250px;top:305px" width="10" height="18" viewBox="1250 305 10 18"><path d="M1258.5 307.3 L1251.8 313.8 L1258.5 320.3Z" fill="#000"/></svg>
<div class="t" style="left:1265.6px;top:265.1px;font-size:14px;line-height:14px;font-weight:700;color:#fff;letter-spacing:-0.391px;">Public Shareable Priority</div>
<div class="t" style="left:1265.6px;top:285.9px;font-size:14px;line-height:14px;font-weight:700;color:#fff;letter-spacing:-0.375px;">Report</div>
<div class="t" style="left:1265.9px;top:306.6px;font-size:14px;line-height:14px;color:#fff;letter-spacing:-0.06px;">Option to Share Priority</div>
<div class="t" style="left:1265.4px;top:327.5px;font-size:14px;line-height:14px;color:#fff;letter-spacing:0.103px;">Report in Public(without</div>
<div class="t" style="left:1265.4px;top:348.1px;font-size:14px;line-height:14px;color:#fff;letter-spacing:0.425px;">Login)</div>
</body></html>
